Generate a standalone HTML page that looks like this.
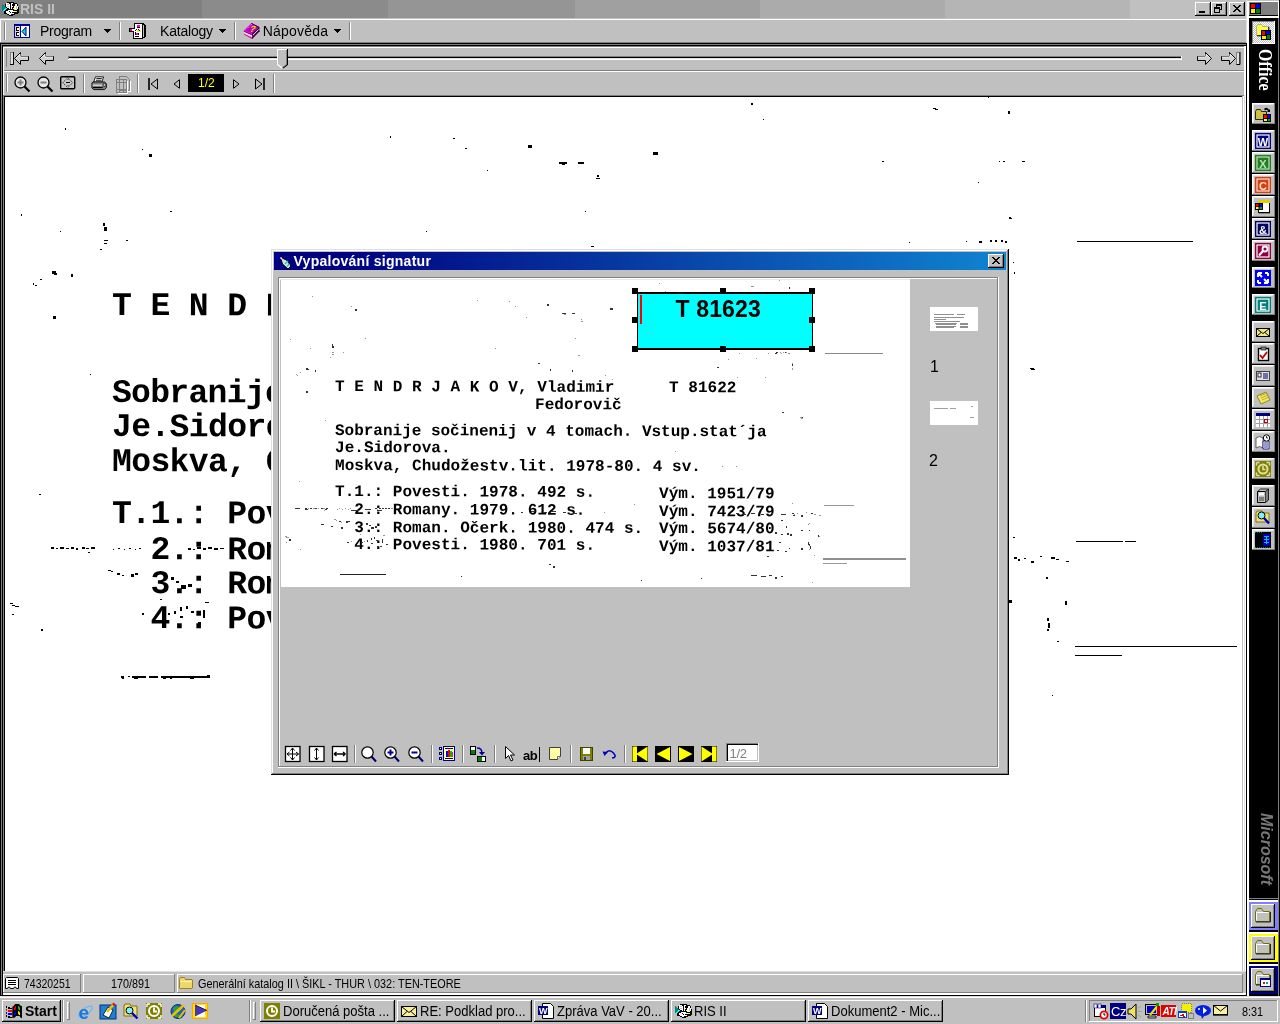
<!DOCTYPE html>
<html><head><meta charset="utf-8"><title>RIS II</title>
<style>
html,body{margin:0;padding:0;background:#fff;}
body{width:1280px;height:1024px;overflow:hidden;position:relative;font-family:"Liberation Sans",sans-serif;}
div,svg{position:absolute;box-sizing:border-box;}
svg{overflow:visible}
.card{font:bold 16px/16px "Liberation Mono",monospace;color:#000;white-space:pre;}
</style></head><body><div id="root" style="left:0;top:0;width:1280px;height:1024px;will-change:transform;">
<div id="doc" style="left:5px;top:97px;width:1237px;height:874px;background:#fff;overflow:hidden;"><div class="card" style="left:107.2px;top:192.7px;font-size:33.00px;line-height:33.00px;letter-spacing:-0.60px;transform:rotate(0.17deg);transform-origin:0 80%;">T E N D R J A K O V, Vladimir</div><div class="card" style="left:773.6px;top:194.2px;font-size:33.00px;line-height:33.00px;letter-spacing:-0.60px;transform:rotate(0.17deg);transform-origin:0 80%;">T 81622</div><div class="card" style="left:505.1px;top:228.2px;font-size:33.00px;line-height:33.00px;letter-spacing:-0.60px;transform:rotate(0.17deg);transform-origin:0 80%;">Fedorovič</div><div class="card" style="left:107.2px;top:279.6px;font-size:33.00px;line-height:33.00px;letter-spacing:-0.69px;transform:rotate(0.17deg);transform-origin:0 80%;">Sobranije sočinenij v 4 tomach. Vstup.stat´ja</div><div class="card" style="left:107.2px;top:314.2px;font-size:33.00px;line-height:33.00px;letter-spacing:-0.60px;transform:rotate(0.17deg);transform-origin:0 80%;">Je.Sidorova.</div><div class="card" style="left:107.2px;top:348.8px;font-size:33.00px;line-height:33.00px;letter-spacing:-0.60px;transform:rotate(0.17deg);transform-origin:0 80%;">Moskva, Chudožestv.lit. 1978-80. 4 sv.</div><div class="card" style="left:107.2px;top:401.4px;font-size:33.00px;line-height:33.00px;letter-spacing:-0.60px;transform:rotate(0.17deg);transform-origin:0 80%;">T.1.: Povesti. 1978. 492 s.</div><div class="card" style="left:107.2px;top:436.6px;font-size:33.00px;line-height:33.00px;letter-spacing:-0.60px;transform:rotate(0.17deg);transform-origin:0 80%;">  2.: Romany. 1979. 612 s.</div><div class="card" style="left:107.2px;top:471.4px;font-size:33.00px;line-height:33.00px;letter-spacing:-0.60px;transform:rotate(0.17deg);transform-origin:0 80%;">  3.: Roman. Očerk. 1980. 474 s.</div><div class="card" style="left:107.2px;top:506.4px;font-size:33.00px;line-height:33.00px;letter-spacing:-0.60px;transform:rotate(0.17deg);transform-origin:0 80%;">  4.: Povesti. 1980. 701 s.</div><div class="card" style="left:753.1px;top:404.2px;font-size:33.00px;line-height:33.00px;letter-spacing:-0.60px;transform:rotate(0.17deg);transform-origin:0 80%;">Vým. 1951/79</div><div class="card" style="left:753.1px;top:439.4px;font-size:33.00px;line-height:33.00px;letter-spacing:-0.60px;transform:rotate(0.17deg);transform-origin:0 80%;">Vým. 7423/79</div><div class="card" style="left:753.1px;top:474.2px;font-size:33.00px;line-height:33.00px;letter-spacing:-0.60px;transform:rotate(0.17deg);transform-origin:0 80%;">Vým. 5674/80</div><div class="card" style="left:753.1px;top:509.2px;font-size:33.00px;line-height:33.00px;letter-spacing:-0.60px;transform:rotate(0.17deg);transform-origin:0 80%;">Vým. 1037/81</div><svg style="left:0;top:0" width="1237" height="874" shape-rendering="crispEdges"><g fill="#000"><rect x="60" y="31" width="1" height="2"/><rect x="137" y="52" width="1" height="1"/><rect x="144" y="57" width="3" height="3"/><rect x="16" y="117" width="1" height="2"/><rect x="165" y="114" width="2" height="1"/><rect x="55" y="134" width="1" height="1"/><rect x="98" y="126" width="2" height="3"/><rect x="99" y="130" width="3" height="4"/><rect x="99" y="143" width="4" height="1"/><rect x="99" y="146" width="3" height="1"/><rect x="121" y="143" width="2" height="1"/><rect x="95" y="152" width="2" height="1"/><rect x="47" y="174" width="4" height="3"/><rect x="49" y="176" width="3" height="2"/><rect x="66" y="177" width="2" height="3"/><rect x="35" y="182" width="2" height="1"/><rect x="28" y="186" width="1" height="2"/><rect x="30" y="188" width="2" height="1"/><rect x="48" y="219" width="3" height="3"/><rect x="85" y="277" width="1" height="1"/><rect x="385" y="39" width="1" height="2"/><rect x="448" y="41" width="2" height="1"/><rect x="460" y="51" width="2" height="1"/><rect x="523" y="48" width="4" height="3"/><rect x="554" y="65" width="8" height="2"/><rect x="557" y="67" width="3" height="1"/><rect x="573" y="65" width="6" height="2"/><rect x="592" y="78" width="2" height="2"/><rect x="591" y="81" width="4" height="1"/><rect x="482" y="73" width="1" height="1"/><rect x="580" y="114" width="1" height="1"/><rect x="421" y="134" width="1" height="1"/><rect x="586" y="149" width="3" height="1"/><rect x="746" y="6" width="2" height="2"/><rect x="758" y="22" width="1" height="1"/><rect x="648" y="55" width="5" height="3"/><rect x="928" y="11" width="3" height="1"/><rect x="930" y="12" width="3" height="1"/><rect x="983" y="0" width="1" height="1"/><rect x="1003" y="14" width="2" height="3"/><rect x="877" y="64" width="2" height="1"/><rect x="994" y="64" width="1" height="1"/><rect x="998" y="64" width="2" height="1"/><rect x="1017" y="64" width="3" height="1"/><rect x="973" y="85" width="1" height="1"/><rect x="1004" y="121" width="3" height="1"/><rect x="904" y="145" width="1" height="1"/><rect x="961" y="144" width="1" height="1"/><rect x="974" y="144" width="3" height="2"/><rect x="985" y="143" width="2" height="2"/><rect x="990" y="143" width="2" height="2"/><rect x="996" y="143" width="2" height="2"/><rect x="1000" y="144" width="2" height="2"/><rect x="1004" y="120" width="2" height="1"/><rect x="1008" y="165" width="1" height="1"/><rect x="1009" y="175" width="1" height="2"/><rect x="1025" y="271" width="4" height="1"/><rect x="1026" y="272" width="4" height="1"/><rect x="1008" y="440" width="2" height="1"/><rect x="1009" y="460" width="3" height="2"/><rect x="1013" y="462" width="2" height="2"/><rect x="1019" y="461" width="2" height="1"/><rect x="1026" y="464" width="3" height="2"/><rect x="1035" y="459" width="2" height="1"/><rect x="1046" y="460" width="4" height="2"/><rect x="1051" y="462" width="3" height="1"/><rect x="1061" y="464" width="3" height="1"/><rect x="1041" y="480" width="2" height="2"/><rect x="1004" y="503" width="3" height="3"/><rect x="1060" y="504" width="2" height="4"/><rect x="1042" y="521" width="2" height="3"/><rect x="1043" y="526" width="2" height="5"/><rect x="1042" y="532" width="2" height="2"/><rect x="1052" y="544" width="2" height="1"/><rect x="1047" y="598" width="1" height="1"/><rect x="34" y="397" width="2" height="1"/><rect x="46" y="450" width="3" height="2"/><rect x="51" y="451" width="2" height="1"/><rect x="55" y="450" width="4" height="2"/><rect x="61" y="451" width="3" height="1"/><rect x="66" y="450" width="3" height="2"/><rect x="71" y="451" width="2" height="2"/><rect x="77" y="450" width="3" height="2"/><rect x="81" y="451" width="3" height="1"/><rect x="86" y="450" width="4" height="2"/><rect x="83" y="455" width="2" height="1"/><rect x="108" y="452" width="1" height="1"/><rect x="113" y="451" width="2" height="1"/><rect x="119" y="452" width="1" height="1"/><rect x="124" y="451" width="2" height="1"/><rect x="130" y="452" width="1" height="1"/><rect x="134" y="451" width="2" height="1"/><rect x="183" y="451" width="3" height="2"/><rect x="188" y="452" width="2" height="1"/><rect x="192" y="450" width="4" height="2"/><rect x="198" y="451" width="3" height="2"/><rect x="203" y="450" width="4" height="2"/><rect x="209" y="451" width="4" height="2"/><rect x="215" y="451" width="4" height="1"/><rect x="103" y="473" width="3" height="1"/><rect x="106" y="474" width="2" height="1"/><rect x="112" y="476" width="3" height="2"/><rect x="117" y="478" width="2" height="1"/><rect x="126" y="477" width="3" height="3"/><rect x="130" y="476" width="3" height="2"/><rect x="5" y="506" width="3" height="1"/><rect x="7" y="508" width="3" height="1"/><rect x="10" y="509" width="4" height="1"/><rect x="7" y="517" width="2" height="1"/><rect x="36" y="532" width="2" height="2"/><rect x="137" y="516" width="2" height="2"/><rect x="166" y="480" width="3" height="3"/><rect x="171" y="484" width="3" height="2"/><rect x="176" y="488" width="5" height="4"/><rect x="183" y="487" width="4" height="3"/><rect x="155" y="502" width="2" height="1"/><rect x="200" y="505" width="4" height="1"/><rect x="175" y="510" width="2" height="4"/><rect x="181" y="509" width="2" height="3"/><rect x="169" y="514" width="2" height="3"/><rect x="186" y="514" width="3" height="2"/><rect x="198" y="513" width="2" height="8"/><rect x="193" y="525" width="3" height="2"/><rect x="175" y="519" width="3" height="2"/><rect x="163" y="516" width="2" height="2"/><rect x="1072" y="144" width="116" height="1"/><rect x="1071" y="444" width="47" height="1"/><rect x="1120" y="444" width="11" height="1"/><rect x="1070" y="549" width="162" height="1"/><rect x="1070" y="558" width="47" height="1"/><rect x="116" y="579" width="3" height="2"/><rect x="117" y="581" width="2" height="1"/><rect x="123" y="579" width="2" height="1"/><rect x="127" y="579" width="14" height="2"/><rect x="129" y="581" width="4" height="1"/><rect x="144" y="579" width="9" height="2"/><rect x="156" y="579" width="49" height="2"/><rect x="158" y="581" width="3" height="1"/><rect x="165" y="581" width="2" height="1"/><rect x="185" y="581" width="4" height="1"/><rect x="202" y="578" width="3" height="1"/></g></svg></div><div style="left:0;top:0;width:1247px;height:18px;background:linear-gradient(to right,#808080 0px,#808080 202px,#8b8b8b 202px,#8b8b8b 388px,#959595 388px,#959595 575px,#a0a0a0 575px,#a0a0a0 760px,#ababab 760px,#ababab 945px,#b5b5b5 945px,#b5b5b5 1130px,#c0c0c0 1130px,#c0c0c0 1247px);"></div><svg style="left:2px;top:1px" width="17" height="16" viewBox="0 0 17 16" shape-rendering="crispEdges" ><path d="M5 1h7v1h3v1h1v3h1v6h-1v1h-3v1h-2v1H7v-1H5v-1H2V8h1V3h2z" fill="#000"/>
<path d="M0 3h1v1h1v1h1v1h1v2H3v1H2v1H0z" fill="#008888"/>
<path d="M1 9h1v-1h1v-1h2v1H4v1H3v1H1z" fill="#00ffff"/>
<path d="M4 2h3v1h1v5H7v-1H5v-1H4zM5 3v1h2v-1zM5 5v1h2v-1z" fill="#fff"/><path d="M5 3h2v1H5zM5 5h2v1H5z" fill="#c0c0c0"/>
<path d="M9 2h2v1H10v2h1v1H10v2H9z" fill="#fff"/>
<path d="M13 3h2v1h1v4h-1v1h-2v-1h-1V5h1z" fill="#fff"/><path d="M14 5h1v3h-1z" fill="#c0c0c0"/><rect x="15" y="4" width="1" height="1" fill="#000"/>
<path d="M4 10h2v-1h5v1h2v1h-3v1h2v1H9v1H7v-1H5v-1H4zM7 10v1h1v-1zM8 11v1h1v-1z" fill="#fff"/>
<rect x="11" y="7" width="1" height="1" fill="#ffff00"/><rect x="12" y="8" width="1" height="1" fill="#ffff00"/><rect x="13" y="10" width="2" height="1" fill="#ffff00"/></svg><div style="left:20px;top:2.15px;font:bold 14px/14px 'Liberation Sans',sans-serif;color:#c0c0c0;white-space:pre;">RIS II</div><div style="left:1195px;top:2px;width:16px;height:14px;background:#c0c0c0;"></div><div style="left:1195px;top:2px;width:15px;height:1px;background:#fff;"></div><div style="left:1195px;top:2px;width:1px;height:13px;background:#fff;"></div><div style="left:1195px;top:15px;width:16px;height:1px;background:#000;"></div><div style="left:1210px;top:2px;width:1px;height:14px;background:#000;"></div><div style="left:1196px;top:14px;width:14px;height:1px;background:#808080;"></div><div style="left:1209px;top:3px;width:1px;height:12px;background:#808080;"></div><div style="left:1211px;top:2px;width:16px;height:14px;background:#c0c0c0;"></div><div style="left:1211px;top:2px;width:15px;height:1px;background:#fff;"></div><div style="left:1211px;top:2px;width:1px;height:13px;background:#fff;"></div><div style="left:1211px;top:15px;width:16px;height:1px;background:#000;"></div><div style="left:1226px;top:2px;width:1px;height:14px;background:#000;"></div><div style="left:1212px;top:14px;width:14px;height:1px;background:#808080;"></div><div style="left:1225px;top:3px;width:1px;height:12px;background:#808080;"></div><div style="left:1229px;top:2px;width:16px;height:14px;background:#c0c0c0;"></div><div style="left:1229px;top:2px;width:15px;height:1px;background:#fff;"></div><div style="left:1229px;top:2px;width:1px;height:13px;background:#fff;"></div><div style="left:1229px;top:15px;width:16px;height:1px;background:#000;"></div><div style="left:1244px;top:2px;width:1px;height:14px;background:#000;"></div><div style="left:1230px;top:14px;width:14px;height:1px;background:#808080;"></div><div style="left:1243px;top:3px;width:1px;height:12px;background:#808080;"></div><svg style="left:1195px;top:2px" width="16" height="14" viewBox="0 0 16 14" shape-rendering="crispEdges" ><rect x="4" y="9" width="6" height="2" fill="#000"/></svg><svg style="left:1211px;top:2px" width="16" height="14" viewBox="0 0 16 14" shape-rendering="crispEdges" ><path d="M5 2h6v2H5zM5 4h1v1H5zM10 4h1v4h-2v-1h1zM3 5h6v2H3zM3 7h1v4H3zM8 7h1v4H8zM3 10h6v1H3z" fill="#000"/></svg><svg style="left:1229px;top:2px" width="16" height="14" viewBox="0 0 16 14" shape-rendering="crispEdges" ><path d="M4 3h2v1h1v1h2v-1h1v-1h2v1h-1v1h-1v1h-1v1h1v1h1v1h1v1h-2v-1h-1v-1h-2v1h-1v1h-2v-1h1v-1h1v-1h1v-1h-1v-1h-1v-1h-1z" fill="#000"/></svg><div style="left:0px;top:18px;width:1247px;height:24px;background:#c0c0c0;"></div><div style="left:0px;top:19px;width:1247px;height:1px;background:#fff;"></div><div style="left:0px;top:19px;width:1px;height:23px;background:#fff;"></div><div style="left:4px;top:22px;width:1px;height:18px;background:#808080;"></div><div style="left:5px;top:22px;width:1px;height:18px;background:#fff;"></div><svg style="left:14px;top:24px" width="16" height="14" viewBox="0 0 16 14" shape-rendering="crispEdges" >
<rect x="0" y="0" width="16" height="14" fill="#0000a0"/>
<rect x="1" y="2" width="5" height="11" fill="#d8d8c0"/>
<rect x="7" y="2" width="8" height="11" fill="#fff"/>
<rect x="2" y="3" width="3" height="4" fill="#000"/><rect x="3" y="4" width="2" height="2" fill="#fff"/>
<rect x="2" y="8" width="3" height="4" fill="#000"/><rect x="3" y="9" width="2" height="2" fill="#fff"/>
<path d="M12 3v9l-4-4.5z" fill="#00e0e0" stroke="#0000a0" stroke-width="1" shape-rendering="auto"/>
</svg><div style="left:40px;top:24.15px;font:14px/14px 'Liberation Sans',sans-serif;color:#000;white-space:pre;letter-spacing:-0.25px;">Program</div><svg style="left:104px;top:29px" width="7" height="4" viewBox="0 0 7 4" shape-rendering="crispEdges" ><path d="M0 0h7v1H0zM1 1h5v1H1zM2 2h3v1H2zM3 3h1v1H3z" fill="#000"/></svg><div style="left:119px;top:22px;width:1px;height:18px;background:#808080;"></div><div style="left:120px;top:22px;width:1px;height:18px;background:#fff;"></div><svg style="left:129px;top:23px" width="17" height="16" viewBox="0 0 17 16" shape-rendering="crispEdges" >
<path d="M5 0h9v16H4V9h1z" fill="#fff" stroke="none"/>
<path d="M5 0h9v1H5zM5 0h1v5H5zM13 0h1v16h-1zM4 15h10v1H4zM4 8h1v8H4zM0 5h6v1H0zM0 8h5v1H0zM0 5h1v4H0z" fill="#000"/>
<path d="M14 1h1v1h1v12h-1v1h-1z" fill="#c0c0c0"/><path d="M14 0h1v1h1v1h1v12h-1v1h-2v-1h1V2h-1z" fill="#000"/>
<rect x="1" y="6" width="2" height="2" fill="#f00080"/><rect x="3" y="6" width="3" height="2" fill="#fff"/>
<rect x="8" y="2" width="3" height="2" fill="#f000f0"/><rect x="8" y="4" width="3" height="1" fill="#000"/>
<rect x="7" y="10" width="2" height="2" fill="#f000f0"/><rect x="6" y="13" width="4" height="1" fill="#000"/>
<rect x="8" y="7" width="2" height="2" fill="#f0f000"/><rect x="11" y="7" width="1" height="2" fill="#f0f000"/>
<path d="M6 7h1v1H6zM7 6h1v1H7zM9 6h1v1H9zM10 7h1v1h-1zM6 9h1v3H6zM9 10h1v2H9z" fill="#000"/>
</svg><div style="left:160px;top:24.15px;font:14px/14px 'Liberation Sans',sans-serif;color:#000;white-space:pre;letter-spacing:-0.2px;">Katalogy</div><svg style="left:219px;top:29px" width="7" height="4" viewBox="0 0 7 4" shape-rendering="crispEdges" ><path d="M0 0h7v1H0zM1 1h5v1H1zM2 2h3v1H2zM3 3h1v1H3z" fill="#000"/></svg><div style="left:234px;top:22px;width:1px;height:18px;background:#808080;"></div><div style="left:235px;top:22px;width:1px;height:18px;background:#fff;"></div><svg style="left:243px;top:22px" width="18" height="18" viewBox="0 0 18 18" shape-rendering="crispEdges" ><g shape-rendering="auto">
<path d="M8.600 1 L16.300 5 L9 11.800 L0.900 8.300 Z" fill="#c000c0"/>
<path d="M8.600 1 L16.300 5 L15.600 5.700 L8 1.600 Z" fill="#300030"/>
<path d="M0.900 8.300 L9 11.800 L9 13.400 L0.900 9.900 Z" fill="#b000b0"/>
<path d="M0.900 9.900 L9 13.400 L9 15.600 L0.900 11.600 Z" fill="#e8f0e8"/>
<path d="M0.900 11.600 L9 15.600 L9 16.900 L0.900 12.600 Z" fill="#f00090"/>
<path d="M9 11.800 L16.300 5 L16.500 9.200 L9 16.900 Z" fill="#a000a0"/>
<path d="M9 11.800 L16.300 5 L16.300 6.400 L9 13.200 Z" fill="#100010"/>
<path d="M9 15.500 L16.500 7.800 L16.500 9.200 L9 16.900 Z" fill="#200020"/>
<path d="M10 13 L15.500 7.500" stroke="#d0d0d0" stroke-width="1"/>
<path d="M2.200 8 L9 2" stroke="#ffb0ff" stroke-width="1" stroke-dasharray="1 1"/>
</g></svg><div style="left:249.5px;top:24.88px;font:bold 9px/9px 'Liberation Sans',sans-serif;color:#ffe000;white-space:pre;transform:skewX(-20deg);">?</div><div style="left:262.7px;top:24.15px;font:14px/14px 'Liberation Sans',sans-serif;color:#000;white-space:pre;letter-spacing:0.2px;">Nápověda</div><svg style="left:334px;top:29px" width="7" height="4" viewBox="0 0 7 4" shape-rendering="crispEdges" ><path d="M0 0h7v1H0zM1 1h5v1H1zM2 2h3v1H2zM3 3h1v1H3z" fill="#000"/></svg><div style="left:349px;top:22px;width:1px;height:18px;background:#808080;"></div><div style="left:350px;top:22px;width:1px;height:18px;background:#fff;"></div><div style="left:0px;top:42px;width:1247px;height:1px;background:#808080;"></div><div style="left:0px;top:43px;width:1247px;height:1px;background:#000;"></div><div style="left:0px;top:44px;width:1px;height:952px;background:#000;"></div><div style="left:1px;top:44px;width:1246px;height:1px;background:#808080;"></div><div style="left:1px;top:44px;width:1px;height:951px;background:#808080;"></div><div style="left:2px;top:45px;width:1245px;height:1px;background:#000;"></div><div style="left:2px;top:45px;width:1px;height:950px;background:#000;"></div><div style="left:1246px;top:43px;width:1px;height:953px;background:#000;"></div><div style="left:3px;top:46px;width:1243px;height:49px;background:#c0c0c0;"></div><div style="left:3px;top:46px;width:1241px;height:1px;background:#808080;"></div><div style="left:3px;top:47px;width:1241px;height:1px;background:#fff;"></div><div style="left:3px;top:47px;width:1px;height:48px;background:#fff;"></div><div style="left:1244px;top:46px;width:2px;height:49px;background:#fff;"></div><div style="left:4px;top:70px;width:1240px;height:1px;background:#808080;"></div><div style="left:4px;top:71px;width:1240px;height:1px;background:#fff;"></div><div style="left:6px;top:50px;width:1px;height:17px;background:#808080;"></div><svg style="left:10px;top:52px" width="20" height="13" viewBox="0 0 20 13" shape-rendering="crispEdges" ><rect x="0.5" y="0.5" width="3" height="12" fill="#e0e0e0" stroke="#808080" shape-rendering="auto"/><path d="M3.5 0v12.5H0" fill="none" stroke="#000" shape-rendering="auto"/><g transform="translate(4,0)"><path d="M0.5 6.5 L6.5 0.5 V4.5 H14.5 V8.5 H6.5 V12.5 Z" fill="#d0d0d0" stroke="#000" stroke-width="1" shape-rendering="auto"/><path d="M1.5 6.5 L6 2 V5 H14" fill="none" stroke="#f0f0f0" stroke-width="1" shape-rendering="auto"/></g></svg><svg style="left:39px;top:52px" width="16" height="13" viewBox="0 0 16 13" shape-rendering="crispEdges" ><path d="M0.5 6.5 L6.5 0.5 V4.5 H14.5 V8.5 H6.5 V12.5 Z" fill="#d0d0d0" stroke="#000" stroke-width="1" shape-rendering="auto"/><path d="M1.5 6.5 L6 2 V5 H14" fill="none" stroke="#f0f0f0" stroke-width="1" shape-rendering="auto"/></svg><svg style="left:1197px;top:52px" width="16" height="13" viewBox="0 0 16 13" shape-rendering="crispEdges" ><g transform="translate(15,0) scale(-1,1)"><path d="M0.5 6.5 L6.5 0.5 V4.5 H14.5 V8.5 H6.5 V12.5 Z" fill="#d0d0d0" stroke="#000" stroke-width="1" shape-rendering="auto"/><path d="M1.5 6.5 L6 2 V5 H14" fill="none" stroke="#f0f0f0" stroke-width="1" shape-rendering="auto"/></g></svg><svg style="left:1221px;top:52px" width="20" height="13" viewBox="0 0 20 13" shape-rendering="crispEdges" ><g transform="translate(15,0) scale(-1,1)"><path d="M0.5 6.5 L6.5 0.5 V4.5 H14.5 V8.5 H6.5 V12.5 Z" fill="#d0d0d0" stroke="#000" stroke-width="1" shape-rendering="auto"/><path d="M1.5 6.5 L6 2 V5 H14" fill="none" stroke="#f0f0f0" stroke-width="1" shape-rendering="auto"/></g><rect x="15.5" y="0.5" width="3" height="12" fill="#e0e0e0" stroke="#808080" shape-rendering="auto"/><path d="M19 0v12.5H15.5" fill="none" stroke="#000" shape-rendering="auto"/></svg><div style="left:68px;top:56px;width:1114px;height:1px;background:#808080;"></div><div style="left:68px;top:57px;width:1114px;height:1px;background:#000;"></div><div style="left:68px;top:58px;width:1114px;height:1px;background:#dfdfdf;"></div><div style="left:68px;top:59px;width:1114px;height:1px;background:#fff;"></div><div style="left:1181px;top:56px;width:1px;height:4px;background:#fff;"></div><div style="left:68px;top:56px;width:1px;height:3px;background:#808080;"></div><svg style="left:277px;top:49px" width="11" height="19" viewBox="0 0 11 19" shape-rendering="crispEdges" ><path d="M0 0h11v16l-5.500 3-5.500-3z" fill="#c0c0c0"/>
<path d="M0 0h10v1H0zM0 0h1v16H0z" fill="#fff"/><path d="M0.500 15.500l4.500 3.500" stroke="#fff" stroke-width="1.200" shape-rendering="auto"/>
<path d="M10 0h1v16h-1z" fill="#000"/><path d="M9 1h1v15H9z" fill="#808080"/>
<path d="M10.500 15.500l-4.500 3.500" stroke="#000" stroke-width="1.200" shape-rendering="auto"/><path d="M9.500 15.500l-4 3" stroke="#808080" shape-rendering="auto"/></svg><div style="left:6px;top:74px;width:1px;height:18px;background:#808080;"></div><div style="left:7px;top:74px;width:1px;height:18px;background:#fff;"></div><svg style="left:14px;top:76px" width="17" height="17" viewBox="0 0 17 17" shape-rendering="crispEdges" ><g shape-rendering="auto"><circle cx="6.5" cy="6.5" r="5.5" fill="#e8e8e8" stroke="#000" stroke-width="1.3"/><path d="M10.5 10.5 L15.5 15.5" stroke="#000" stroke-width="2.2"/><path d="M3.5 6.5h6M6.5 3.5v6" stroke="#808080" stroke-width="2"/></g></svg><svg style="left:37px;top:76px" width="17" height="17" viewBox="0 0 17 17" shape-rendering="crispEdges" ><g shape-rendering="auto"><circle cx="6.5" cy="6.5" r="5.5" fill="#e8e8e8" stroke="#000" stroke-width="1.3"/><path d="M10.5 10.5 L15.5 15.5" stroke="#000" stroke-width="2.2"/><path d="M3.5 6.5h6" stroke="#808080" stroke-width="2"/></g></svg><svg style="left:60px;top:76px" width="16" height="14" viewBox="0 0 16 14" shape-rendering="crispEdges" ><rect x="0.7" y="0.7" width="14" height="12" rx="1" fill="#c8c8c8" stroke="#000" stroke-width="1.4" shape-rendering="auto"/><g shape-rendering="auto" fill="none" stroke="#303030" stroke-width="1" stroke-dasharray="1.5 1"><path d="M7.7 1.8l5 4.9l-5 4.9l-5-4.9z"/></g><path d="M6 6h4v1H6z" fill="#000"/><path d="M7 3h2v1H7zM7 9h2v1H7zM3 6h1v1H3zM12 6h1v1h-1z" fill="#808080"/></svg><div style="left:83px;top:74px;width:1px;height:19px;background:#808080;"></div><div style="left:84px;top:74px;width:1px;height:19px;background:#fff;"></div><svg style="left:91px;top:76px" width="17" height="15" viewBox="0 0 17 15" shape-rendering="crispEdges" ><g shape-rendering="auto" transform="scale(0.9,0.85)">
<path d="M5 1h9l-2 6H3z" fill="#fff" stroke="#000" stroke-width="1"/>
<path d="M6 3h6M5.5 5h6" stroke="#000" stroke-width="1"/>
<path d="M1 8l2-1h12l2 2v5l-2 2H3l-2-2z" fill="#808080" stroke="#000" stroke-width="1"/>
<path d="M2 10h11v2H2z" fill="#d0d0d0"/>
<path d="M2 13.5h11" stroke="#000" stroke-width="1.5"/>
<circle cx="15" cy="10.5" r="1.8" fill="#c0c0c0" stroke="#000" stroke-width=".8"/>
</g></svg><svg style="left:116px;top:76px" width="16" height="16" viewBox="0 0 16 16" shape-rendering="crispEdges" ><g fill="none" stroke="#808080"><path d="M3.5 0.5h7l3 3v11h-10z"/><path d="M0.5 3.5h10v13h-10z"/><path d="M3.5 3.5v13M7.5 3.5v13M0.5 6.5h10M0.5 13.5h10"/></g><g fill="none" stroke="#fff"><path d="M1.5 17.5h10v-13M14.5 4.5v11h-3"/></g></svg><div style="left:137px;top:74px;width:1px;height:19px;background:#808080;"></div><div style="left:138px;top:74px;width:1px;height:19px;background:#fff;"></div><svg style="left:148px;top:78px" width="11" height="12" viewBox="0 0 11 12" shape-rendering="crispEdges" ><g shape-rendering="auto"><path d="M1 0v12" stroke="#000" stroke-width="1.6"/><path d="M9.5 1v10L3 6z" fill="#c0c0c0" stroke="#000" stroke-width="1"/></g></svg><svg style="left:173px;top:79px" width="8" height="10" viewBox="0 0 8 10" shape-rendering="crispEdges" ><path d="M6.5 0.7v8.6L1 5z" fill="#c0c0c0" stroke="#000" stroke-width="1" shape-rendering="auto"/></svg><div style="left:188px;top:74px;width:36px;height:18px;background:#000;"></div><div style="left:198px;top:76.84px;font:12px/12px 'Liberation Sans',sans-serif;color:#ffff00;white-space:pre;">1/2</div><svg style="left:232px;top:79px" width="8" height="10" viewBox="0 0 8 10" shape-rendering="crispEdges" ><path d="M1.5 0.7v8.6L7 5z" fill="#c0c0c0" stroke="#000" stroke-width="1" shape-rendering="auto"/></svg><svg style="left:254px;top:78px" width="11" height="12" viewBox="0 0 11 12" shape-rendering="crispEdges" ><g shape-rendering="auto"><path d="M10 0v12" stroke="#000" stroke-width="1.6"/><path d="M1.5 1v10L8 6z" fill="#c0c0c0" stroke="#000" stroke-width="1"/></g></svg><div style="left:273px;top:74px;width:1px;height:19px;background:#808080;"></div><div style="left:274px;top:74px;width:1px;height:19px;background:#fff;"></div><div style="left:3px;top:95px;width:1241px;height:1px;background:#808080;"></div><div style="left:3px;top:95px;width:1px;height:876px;background:#808080;"></div><div style="left:4px;top:96px;width:1238px;height:1px;background:#000;"></div><div style="left:4px;top:96px;width:1px;height:875px;background:#000;"></div><div style="left:1242px;top:96px;width:1px;height:875px;background:#c0c0c0;"></div><div style="left:1243px;top:96px;width:1px;height:875px;background:#fff;"></div><div style="left:1244px;top:95px;width:1px;height:876px;background:#dfdfdf;"></div><div style="left:1245px;top:95px;width:1px;height:900px;background:#fff;"></div><div style="left:3px;top:971px;width:1243px;height:24px;background:#c0c0c0;"></div><div style="left:3px;top:971px;width:1243px;height:1px;background:#dfdfdf;"></div><div style="left:3px;top:993px;width:1243px;height:2px;background:#fff;"></div><div style="left:0px;top:995px;width:1247px;height:1px;background:#000;"></div><div style="left:3px;top:974px;width:78px;height:19px;background:#c0c0c0;"></div><div style="left:3px;top:974px;width:78px;height:1px;background:#fff;"></div><div style="left:3px;top:974px;width:1px;height:19px;background:#fff;"></div><div style="left:3px;top:992px;width:78px;height:1px;background:#808080;"></div><div style="left:80px;top:974px;width:1px;height:19px;background:#808080;"></div><div style="left:83px;top:974px;width:92px;height:19px;background:#c0c0c0;"></div><div style="left:83px;top:974px;width:92px;height:1px;background:#fff;"></div><div style="left:83px;top:974px;width:1px;height:19px;background:#fff;"></div><div style="left:83px;top:992px;width:92px;height:1px;background:#808080;"></div><div style="left:174px;top:974px;width:1px;height:19px;background:#808080;"></div><div style="left:177px;top:974px;width:1066px;height:19px;background:#c0c0c0;"></div><div style="left:177px;top:974px;width:1066px;height:1px;background:#fff;"></div><div style="left:177px;top:974px;width:1px;height:19px;background:#fff;"></div><div style="left:177px;top:992px;width:1066px;height:1px;background:#808080;"></div><div style="left:1242px;top:974px;width:1px;height:19px;background:#808080;"></div><svg style="left:5px;top:977px" width="14" height="12" viewBox="0 0 14 12" shape-rendering="crispEdges" ><path d="M1.5 0.5h11l1 1v10h-2l-1-1.5h-1l-1 1.5h-3l-1-1.5h-1l-1 1.5h-2v-10z" fill="#fff" stroke="#000" shape-rendering="auto"/><path d="M3 3h8v1H3zM3 5h8v1H3zM3 7h8v1H3z" fill="#000"/></svg><div style="left:24px;top:976.87px;font:13.5px/13.5px 'Liberation Sans',sans-serif;color:#000;white-space:pre;transform:scaleX(0.775);transform-origin:0 0;">74320251</div><div style="left:111px;top:976.87px;font:13.5px/13.5px 'Liberation Sans',sans-serif;color:#000;white-space:pre;transform:scaleX(0.8);transform-origin:0 0;">170/891</div><svg style="left:179px;top:977px" width="14" height="12" viewBox="0 0 14 12" shape-rendering="crispEdges" ><g shape-rendering="auto"><path d="M0.5 2.5l1-2h4l1 2h6.500l.5 .5v8l-.5 .5h-12l-.5-.5z" fill="#f0d868" stroke="#a08018" stroke-width="1"/><path d="M1.500 4.500h11" stroke="#fff8c0"/></g></svg><div style="left:197.5px;top:976.87px;font:13.5px/13.5px 'Liberation Sans',sans-serif;color:#000;white-space:pre;transform:scaleX(0.806);transform-origin:0 0;">Generální katalog II \ ŠIKL - THUR \ 032: TEN-TEORE</div><div style="left:0px;top:996px;width:1280px;height:28px;background:#c0c0c0;"></div><div style="left:0px;top:996px;width:1280px;height:1px;background:#dfdfdf;"></div><div style="left:0px;top:997px;width:1280px;height:1px;background:#fff;"></div><div style="left:2px;top:1000px;width:59px;height:22px;background:#c0c0c0;"></div><div style="left:2px;top:1000px;width:58px;height:1px;background:#fff;"></div><div style="left:2px;top:1000px;width:1px;height:21px;background:#fff;"></div><div style="left:2px;top:1021px;width:59px;height:1px;background:#000;"></div><div style="left:60px;top:1000px;width:1px;height:22px;background:#000;"></div><div style="left:3px;top:1020px;width:57px;height:1px;background:#808080;"></div><div style="left:59px;top:1001px;width:1px;height:20px;background:#808080;"></div><svg style="left:5px;top:1003px" width="18" height="16" viewBox="0 0 18 16" shape-rendering="crispEdges" ><g shape-rendering="auto">
<path d="M7.300 4 L9 2.500 L10.300 1 H14 L15 2.300 L17 3.300 V15.200 L15.500 14.500 L14.500 13 H11 L10 14.500 L7.300 15 Z" fill="#000"/>
<path d="M9 5.500 L10 3 L11 3 L10.800 6.500 L9.200 7.300Z" fill="#ff0000"/>
<path d="M13 3 L14 3.300 L15 5 L15 7.300 L14 7 L13.200 5.500Z" fill="#00e000"/>
<path d="M9 10.500 L10 8.300 L11 8 L10.800 11.500 L9.200 12.300Z" fill="#0000ff"/>
<path d="M13 8 L14 8.300 L15 10 L15 12.300 L14 12 L13.200 10.500Z" fill="#ffff00"/>
</g>
<path d="M1 3h1v2H1zM1 12h1v2H1zM3 4h2v1h2v1H3zM3 13h2v1h2v1H3z" fill="#000"/>
<path d="M1 6h1v2H1zM3 7h4v2H3z" fill="#ff0000"/>
<path d="M1 9h1v2H1zM3 10h4v2H3z" fill="#0000ff"/>
</svg><div style="left:25px;top:1004.15px;font:bold 14px/14px 'Liberation Sans',sans-serif;color:#000;white-space:pre;">Start</div><div style="left:62px;top:1000px;width:1px;height:22px;background:#808080;"></div><div style="left:63px;top:1000px;width:1px;height:22px;background:#fff;"></div><div style="left:67px;top:1002px;width:1px;height:18px;background:#fff;"></div><div style="left:67px;top:1002px;width:3px;height:1px;background:#fff;"></div><div style="left:69px;top:1002px;width:1px;height:18px;background:#808080;"></div><div style="left:67px;top:1019px;width:3px;height:1px;background:#808080;"></div><svg style="left:77px;top:1003px" width="17" height="17" viewBox="0 0 17 17" shape-rendering="crispEdges" ><g shape-rendering="auto"><ellipse cx="8.500" cy="8.500" rx="8" ry="3.200" fill="none" stroke="#60b8ff" stroke-width="1.200" transform="rotate(-35 8.500 8.500)"/><text x="1.500" y="15.500" font-family="Liberation Sans,sans-serif" font-weight="bold" font-size="19" fill="#1878e0">e</text></g></svg><svg style="left:100px;top:1003px" width="17" height="17" viewBox="0 0 17 17" shape-rendering="crispEdges" ><g shape-rendering="auto"><rect x="0" y="2" width="16" height="14" fill="#2080d0" stroke="#003080"/><path d="M3 12l5-8 5 3-4 8z" fill="#fff" stroke="#000" stroke-width=".8"/><path d="M7 9L14 1" stroke="#f0c000" stroke-width="2.500"/><path d="M13 2l1.500-1.500" stroke="#f00000" stroke-width="2.500"/></g></svg><svg style="left:123px;top:1003px" width="17" height="17" viewBox="0 0 17 17" shape-rendering="crispEdges" ><g shape-rendering="auto"><path d="M1 3l1-2h5l1 2h6v10H1z" fill="#f0e080" stroke="#807000"/><circle cx="6.500" cy="7.500" r="3.500" fill="#80f0ff" stroke="#000"/><path d="M9 10l5.500 5.500" stroke="#0000c0" stroke-width="2.400"/></g></svg><svg style="left:146px;top:1003px" width="17" height="17" viewBox="0 0 17 17" shape-rendering="crispEdges" ><g shape-rendering="auto"><rect x="0" y="0" width="16" height="16" fill="#808000"/><circle cx="8" cy="8" r="5" fill="none" stroke="#fff" stroke-width="2"/><path d="M8 4.500v4h3" fill="none" stroke="#fff" stroke-width="1.800"/><path d="M1 1h3M1 1v3M15 1h-3M15 1v3M1 15h3M1 15v-3M15 15h-3M15 15v-3" stroke="#fff" stroke-width="1.400"/></g></svg><svg style="left:170px;top:1003px" width="17" height="17" viewBox="0 0 17 17" shape-rendering="crispEdges" ><g shape-rendering="auto"><circle cx="8" cy="8.500" r="7" fill="#2060c0" stroke="#103070"/><path d="M3 5q3-3 6-1t-2 4 3 4-5 2z" fill="#30a030"/><path d="M2 13L14 2" stroke="#f0c000" stroke-width="2.600"/><path d="M9 15l6-8" stroke="#f0c000" stroke-width="2"/></g></svg><svg style="left:192px;top:1003px" width="16" height="16" viewBox="0 0 16 16" shape-rendering="crispEdges" ><g shape-rendering="auto"><rect x="0" y="0" width="16" height="16" fill="#ffa800"/><rect x="1" y="1" width="14" height="14" fill="#ffe000"/><rect x="3" y="2" width="10" height="12" fill="#fff"/><path d="M3 2l12 5.500-12 6z" fill="#4838b0"/><path d="M3 2l12 5.500" stroke="#201060" stroke-width="1"/></g></svg><div style="left:249px;top:1000px;width:1px;height:22px;background:#808080;"></div><div style="left:250px;top:1000px;width:1px;height:22px;background:#fff;"></div><div style="left:253px;top:1002px;width:1px;height:18px;background:#fff;"></div><div style="left:253px;top:1002px;width:3px;height:1px;background:#fff;"></div><div style="left:255px;top:1002px;width:1px;height:18px;background:#808080;"></div><div style="left:253px;top:1019px;width:3px;height:1px;background:#808080;"></div><div style="left:260px;top:1000px;width:135px;height:22px;background:#c0c0c0;"></div><div style="left:260px;top:1000px;width:134px;height:1px;background:#fff;"></div><div style="left:260px;top:1000px;width:1px;height:21px;background:#fff;"></div><div style="left:260px;top:1021px;width:135px;height:1px;background:#000;"></div><div style="left:394px;top:1000px;width:1px;height:22px;background:#000;"></div><div style="left:261px;top:1020px;width:133px;height:1px;background:#808080;"></div><div style="left:393px;top:1001px;width:1px;height:20px;background:#808080;"></div><svg style="left:264px;top:1003px" width="16" height="16" viewBox="0 0 16 16" shape-rendering="crispEdges" ><g shape-rendering="auto"><rect width="16" height="16" fill="#808000"/><circle cx="8" cy="8" r="5" fill="none" stroke="#fff" stroke-width="2"/><path d="M8 4.500v4h3" fill="none" stroke="#fff" stroke-width="1.800"/></g></svg><div style="left:282.5px;top:1004.15px;font:14px/14px 'Liberation Sans',sans-serif;color:#000;white-space:pre;transform:scaleX(0.93);transform-origin:0 0;">Doručená pošta ...</div><div style="left:397px;top:1000px;width:135px;height:22px;background:#c0c0c0;"></div><div style="left:397px;top:1000px;width:134px;height:1px;background:#fff;"></div><div style="left:397px;top:1000px;width:1px;height:21px;background:#fff;"></div><div style="left:397px;top:1021px;width:135px;height:1px;background:#000;"></div><div style="left:531px;top:1000px;width:1px;height:22px;background:#000;"></div><div style="left:398px;top:1020px;width:133px;height:1px;background:#808080;"></div><div style="left:530px;top:1001px;width:1px;height:20px;background:#808080;"></div><svg style="left:401px;top:1006px" width="16" height="11" viewBox="0 0 16 11" shape-rendering="crispEdges" ><g shape-rendering="auto"><rect x="0.500" y="0.500" width="15" height="10" fill="#f8f0a0" stroke="#000"/><path d="M0.500 0.500l7.500 6 7.500-6M0.500 10.500l5.500-5M15.500 10.500l-5.500-5" fill="none" stroke="#000"/></g></svg><div style="left:419.5px;top:1004.15px;font:14px/14px 'Liberation Sans',sans-serif;color:#000;white-space:pre;transform:scaleX(0.93);transform-origin:0 0;">RE: Podklad pro...</div><div style="left:534px;top:1000px;width:135px;height:22px;background:#c0c0c0;"></div><div style="left:534px;top:1000px;width:134px;height:1px;background:#fff;"></div><div style="left:534px;top:1000px;width:1px;height:21px;background:#fff;"></div><div style="left:534px;top:1021px;width:135px;height:1px;background:#000;"></div><div style="left:668px;top:1000px;width:1px;height:22px;background:#000;"></div><div style="left:535px;top:1020px;width:133px;height:1px;background:#808080;"></div><div style="left:667px;top:1001px;width:1px;height:20px;background:#808080;"></div><svg style="left:538px;top:1003px" width="16" height="16" viewBox="0 0 16 16" shape-rendering="crispEdges" ><g shape-rendering="auto"><path d="M4.500 0.500h8l3 3v12h-11z" fill="#fff" stroke="#000"/><rect x="0" y="3" width="10" height="9" fill="#000080"/><text x="1" y="10.500" font-family="Liberation Sans,sans-serif" font-weight="bold" font-size="9" fill="#fff">W</text></g></svg><div style="left:556.5px;top:1004.15px;font:14px/14px 'Liberation Sans',sans-serif;color:#000;white-space:pre;transform:scaleX(0.93);transform-origin:0 0;">Zpráva VaV - 20...</div><div style="left:671px;top:1000px;width:135px;height:22px;background:#c0c0c0;"></div><div style="left:671px;top:1000px;width:134px;height:1px;background:#fff;"></div><div style="left:671px;top:1000px;width:1px;height:21px;background:#fff;"></div><div style="left:671px;top:1021px;width:135px;height:1px;background:#000;"></div><div style="left:805px;top:1000px;width:1px;height:22px;background:#000;"></div><div style="left:672px;top:1020px;width:133px;height:1px;background:#808080;"></div><div style="left:804px;top:1001px;width:1px;height:20px;background:#808080;"></div><svg style="left:675px;top:1003px" width="17" height="16" viewBox="0 0 17 16" shape-rendering="crispEdges" ><path d="M5 1h7v1h3v1h1v3h1v6h-1v1h-3v1h-2v1H7v-1H5v-1H2V8h1V3h2z" fill="#000"/>
<path d="M0 3h1v1h1v1h1v1h1v2H3v1H2v1H0z" fill="#008888"/>
<path d="M1 9h1v-1h1v-1h2v1H4v1H3v1H1z" fill="#00ffff"/>
<path d="M4 2h3v1h1v5H7v-1H5v-1H4zM5 3v1h2v-1zM5 5v1h2v-1z" fill="#fff"/><path d="M5 3h2v1H5zM5 5h2v1H5z" fill="#c0c0c0"/>
<path d="M9 2h2v1H10v2h1v1H10v2H9z" fill="#fff"/>
<path d="M13 3h2v1h1v4h-1v1h-2v-1h-1V5h1z" fill="#fff"/><path d="M14 5h1v3h-1z" fill="#c0c0c0"/><rect x="15" y="4" width="1" height="1" fill="#000"/>
<path d="M4 10h2v-1h5v1h2v1h-3v1h2v1H9v1H7v-1H5v-1H4zM7 10v1h1v-1zM8 11v1h1v-1z" fill="#fff"/>
<rect x="11" y="7" width="1" height="1" fill="#ffff00"/><rect x="12" y="8" width="1" height="1" fill="#ffff00"/><rect x="13" y="10" width="2" height="1" fill="#ffff00"/></svg><div style="left:693.5px;top:1004.15px;font:14px/14px 'Liberation Sans',sans-serif;color:#000;white-space:pre;transform:scaleX(0.93);transform-origin:0 0;">RIS II</div><div style="left:808px;top:1000px;width:135px;height:22px;background:#c0c0c0;"></div><div style="left:808px;top:1000px;width:134px;height:1px;background:#fff;"></div><div style="left:808px;top:1000px;width:1px;height:21px;background:#fff;"></div><div style="left:808px;top:1021px;width:135px;height:1px;background:#000;"></div><div style="left:942px;top:1000px;width:1px;height:22px;background:#000;"></div><div style="left:809px;top:1020px;width:133px;height:1px;background:#808080;"></div><div style="left:941px;top:1001px;width:1px;height:20px;background:#808080;"></div><svg style="left:812px;top:1003px" width="16" height="16" viewBox="0 0 16 16" shape-rendering="crispEdges" ><g shape-rendering="auto"><path d="M4.500 0.500h8l3 3v12h-11z" fill="#fff" stroke="#000"/><rect x="0" y="3" width="10" height="9" fill="#000080"/><text x="1" y="10.500" font-family="Liberation Sans,sans-serif" font-weight="bold" font-size="9" fill="#fff">W</text></g></svg><div style="left:830.5px;top:1004.15px;font:14px/14px 'Liberation Sans',sans-serif;color:#000;white-space:pre;transform:scaleX(0.93);transform-origin:0 0;">Dokument2 - Mic...</div><div style="left:1085px;top:1000px;width:1px;height:22px;background:#808080;"></div><div style="left:1086px;top:1000px;width:1px;height:22px;background:#fff;"></div><div style="left:1089px;top:1000px;width:189px;height:22px;background:#c0c0c0;"></div><div style="left:1089px;top:1000px;width:189px;height:1px;background:#808080;"></div><div style="left:1089px;top:1000px;width:1px;height:22px;background:#808080;"></div><div style="left:1089px;top:1021px;width:189px;height:1px;background:#fff;"></div><div style="left:1277px;top:1000px;width:1px;height:22px;background:#fff;"></div><svg style="left:1093px;top:1003px" width="17" height="17" viewBox="0 0 17 17" shape-rendering="crispEdges" ><g shape-rendering="auto"><rect x="1.500" y="4.500" width="11" height="9" fill="#fff" stroke="#000"/><rect x="1" y="2" width="12" height="3" fill="#000080"/><rect x="1" y="1" width="3" height="4" fill="#fff" stroke="#000080" stroke-width=".6"/><rect x="5" y="1" width="3" height="4" fill="#fff" stroke="#000080" stroke-width=".6"/><circle cx="11" cy="12" r="3.600" fill="#fff" stroke="#e00000" stroke-width="1.800"/><path d="M11 10v2h1.500" stroke="#000" fill="none"/></g></svg><div style="left:1110px;top:1003px;width:16px;height:16px;background:#000080;"></div><div style="left:1111px;top:1005.00px;font:13px/13px 'Liberation Sans',sans-serif;color:#fff;white-space:pre;letter-spacing:-0.3px;">Cz</div><svg style="left:1127px;top:1003px" width="17" height="17" viewBox="0 0 17 17" shape-rendering="crispEdges" ><g shape-rendering="auto"><path d="M1 6h3l5-5v15l-5-5H1z" fill="#f0e060" stroke="#000" stroke-width="1"/><path d="M11 5l3-2M11 8.500h4M11 12l3 2" stroke="#a0a0a0" stroke-width="1"/></g></svg><svg style="left:1145px;top:1003px" width="17" height="17" viewBox="0 0 17 17" shape-rendering="crispEdges" ><g shape-rendering="auto"><rect x="0.500" y="1.500" width="12" height="10" fill="#c0c0c0" stroke="#000"/><rect x="2" y="3" width="9" height="7" fill="#0000c0"/><path d="M3 13h8v2H3z" fill="#c0c0c0" stroke="#000" stroke-width=".8"/><path d="M5 12L14 1" stroke="#f0e000" stroke-width="2"/><rect x="12" y="3" width="3" height="10" fill="#c00000"/><path d="M11 0h3v3h-3z" fill="#00a000"/></g></svg><div style="left:1161px;top:1005px;width:15px;height:12px;background:#e00000;"></div><div style="left:1162.5px;top:1007.03px;font:bold 10px/10px 'Liberation Sans',sans-serif;color:#fff;white-space:pre;letter-spacing:-0.6px;font-style:italic;">ATI</div><svg style="left:1178px;top:1003px" width="17" height="17" viewBox="0 0 17 17" shape-rendering="crispEdges" ><g><rect x="3.500" y="0.500" width="10" height="9" fill="#f0f000" stroke="#808080" stroke-dasharray="1 1"/><rect x="0" y="8" width="9" height="7" fill="#0040e0"/><rect x="1" y="10" width="7" height="4" fill="#fff"/><path d="M2 12h2v-1h1v2h2" stroke="#e00000" fill="none"/><rect x="10" y="10" width="5" height="5" fill="#c0c0c0" stroke="#808080"/></g></svg><svg style="left:1195px;top:1003px" width="17" height="17" viewBox="0 0 17 17" shape-rendering="crispEdges" ><g shape-rendering="auto"><ellipse cx="8" cy="7.500" rx="8" ry="5.500" fill="#0020e0"/><path d="M6 12l1 4 3-4z" fill="#0020e0"/><path d="M8 4v7l4-3.500z" fill="#fff"/><circle cx="4" cy="6" r="1" fill="#fff"/></g></svg><svg style="left:1213px;top:1005px" width="15" height="11" viewBox="0 0 15 11" shape-rendering="crispEdges" ><g shape-rendering="auto"><rect x="0.500" y="0.500" width="14" height="9" fill="#f8f0a0" stroke="#000"/><path d="M0.500 0.500l7 5.500 7-5.500" fill="none" stroke="#000"/><path d="M0 10.500h15" stroke="#404040"/></g></svg><div style="left:1241.5px;top:1005.92px;font:12.5px/12.5px 'Liberation Sans',sans-serif;color:#000;white-space:pre;transform:scaleX(0.87);transform-origin:0 0;">8:31</div><div style="left:1247px;top:0px;width:33px;height:996px;background:#000;"></div><div style="left:1247px;top:0px;width:2px;height:996px;background:#fff;"></div><div style="left:1246px;top:0px;width:1px;height:43px;background:#dfdfdf;"></div><div style="left:1247px;top:0px;width:33px;height:1px;background:#c0c0c0;"></div><div style="left:1247px;top:1px;width:32px;height:1px;background:#fff;"></div><div style="left:1249px;top:2px;width:29px;height:13px;background:#808080;"></div><div style="left:1249px;top:15px;width:29px;height:1px;background:#000;"></div><div style="left:1249px;top:16px;width:29px;height:2px;background:#fff;"></div><div style="left:1278px;top:1px;width:1px;height:17px;background:#fff;"></div><div style="left:1278px;top:18px;width:1px;height:978px;background:#808080;"></div><div style="left:1279px;top:0px;width:1px;height:996px;background:#000;"></div><svg style="left:1250px;top:3px" width="11" height="11" viewBox="0 0 11 11" shape-rendering="crispEdges" ><rect width="11" height="11" fill="#000"/><rect x="1" y="1" width="4" height="4" fill="#f00000"/><rect x="6" y="1" width="4" height="4" fill="#0000e0"/><rect x="1" y="6" width="4" height="4" fill="#f0f000"/><rect x="6" y="6" width="4" height="4" fill="#008000"/></svg><div style="left:1252px;top:21px;width:23px;height:23px;background:#e0e0e0;background:repeating-conic-gradient(#fff 0% 25%,#c0c0c0 0% 50%) 0 0/2px 2px;"></div><div style="left:1252px;top:21px;width:23px;height:1px;background:#808080;"></div><div style="left:1252px;top:21px;width:1px;height:23px;background:#808080;"></div><div style="left:1252px;top:43px;width:23px;height:1px;background:#fff;"></div><div style="left:1274px;top:21px;width:1px;height:23px;background:#fff;"></div><svg style="left:1256px;top:24px" width="14" height="13" viewBox="0 0 14 13" shape-rendering="crispEdges" ><g shape-rendering="auto"><path d="M0.5 2.500l1.500-2h3.500l1.500 2h5.500v9h-12z" fill="#ffff40" stroke="#a0a0a0" stroke-width=".8"/><path d="M1 11.800h11.500" stroke="#000" stroke-width="1"/><path d="M12.800 3v8" stroke="#000" stroke-width="1"/></g></svg><svg style="left:1261px;top:30px" width="10" height="10" viewBox="0 0 10 10" shape-rendering="crispEdges" ><rect width="10" height="10" fill="#000"/><rect x="1" y="1" width="3" height="4" fill="#f00000"/><rect x="5" y="1" width="4" height="3" fill="#0000e0"/><rect x="1" y="6" width="4" height="3" fill="#f0f000"/><rect x="6" y="5" width="3" height="4" fill="#008000"/></svg><div style="left:1253px;top:48px;width:22px;height:44px;"><div style="left:23px;top:0.500px;transform:rotate(90deg) scale(0.86,1);transform-origin:0 0;font:bold 18.500px/22px 'Liberation Serif',serif;color:#fff;white-space:pre;">Office</div></div><div style="left:1252px;top:103px;width:23px;height:21px;background:#c0c0c0;"></div><div style="left:1252px;top:103px;width:23px;height:1px;background:#fff;"></div><div style="left:1252px;top:103px;width:1px;height:21px;background:#fff;"></div><div style="left:1252px;top:123px;width:23px;height:1px;background:#808080;"></div><div style="left:1274px;top:103px;width:1px;height:21px;background:#808080;"></div><div style="left:1253px;top:104px;width:20px;height:1px;background:#e8e8e8;"></div><div style="left:1253px;top:104px;width:1px;height:18px;background:#e8e8e8;"></div><svg style="left:1255px;top:106px" width="16" height="16" viewBox="0 0 16 16" shape-rendering="crispEdges" ><g shape-rendering="auto"><path d="M0.500 5.500l1-2h4l1 2h5v8h-11z" fill="#d0c040" stroke="#000" stroke-width=".8"/><path d="M9 3q3-3 5 1l1-1v3h-3l1-1q-1.500-2-3-.5z" fill="#000"/></g><rect x="8" y="8" width="8" height="8" fill="#000"/><rect x="9" y="9" width="3" height="3" fill="#f00"/><rect x="13" y="9" width="2" height="3" fill="#00f"/><rect x="9" y="13" width="3" height="2" fill="#ff0"/><rect x="13" y="13" width="2" height="2" fill="#0a0"/></svg><div style="left:1252px;top:130px;width:23px;height:21px;background:#c0c0c0;"></div><div style="left:1252px;top:130px;width:23px;height:1px;background:#fff;"></div><div style="left:1252px;top:130px;width:1px;height:21px;background:#fff;"></div><div style="left:1252px;top:150px;width:23px;height:1px;background:#808080;"></div><div style="left:1274px;top:130px;width:1px;height:21px;background:#808080;"></div><div style="left:1253px;top:131px;width:20px;height:1px;background:#e8e8e8;"></div><div style="left:1253px;top:131px;width:1px;height:18px;background:#e8e8e8;"></div><svg style="left:1255px;top:133px" width="16" height="16" viewBox="0 0 16 16" shape-rendering="crispEdges" ><g shape-rendering="auto"><rect x="0" y="0" width="16" height="16" fill="#000080"/><rect x="2" y="2" width="12" height="12" fill="none" stroke="#fff" stroke-width="1.200"/><text x="8" y="12.500" text-anchor="middle" font-family="Liberation Sans,sans-serif" font-weight="bold" font-size="11" fill="#fff">W</text></g></svg><div style="left:1252px;top:152px;width:23px;height:21px;background:#c0c0c0;"></div><div style="left:1252px;top:152px;width:23px;height:1px;background:#fff;"></div><div style="left:1252px;top:152px;width:1px;height:21px;background:#fff;"></div><div style="left:1252px;top:172px;width:23px;height:1px;background:#808080;"></div><div style="left:1274px;top:152px;width:1px;height:21px;background:#808080;"></div><div style="left:1253px;top:153px;width:20px;height:1px;background:#e8e8e8;"></div><div style="left:1253px;top:153px;width:1px;height:18px;background:#e8e8e8;"></div><svg style="left:1255px;top:155px" width="16" height="16" viewBox="0 0 16 16" shape-rendering="crispEdges" ><g shape-rendering="auto"><rect x="0" y="0" width="16" height="16" fill="#208020"/><rect x="2" y="2" width="12" height="12" fill="none" stroke="#c0e0c0" stroke-width="1.200"/><text x="8" y="12.500" text-anchor="middle" font-family="Liberation Sans,sans-serif" font-weight="bold" font-size="11" fill="#c0e0c0">X</text></g></svg><div style="left:1252px;top:174px;width:23px;height:21px;background:#c0c0c0;"></div><div style="left:1252px;top:174px;width:23px;height:1px;background:#fff;"></div><div style="left:1252px;top:174px;width:1px;height:21px;background:#fff;"></div><div style="left:1252px;top:194px;width:23px;height:1px;background:#808080;"></div><div style="left:1274px;top:174px;width:1px;height:21px;background:#808080;"></div><div style="left:1253px;top:175px;width:20px;height:1px;background:#e8e8e8;"></div><div style="left:1253px;top:175px;width:1px;height:18px;background:#e8e8e8;"></div><svg style="left:1255px;top:177px" width="16" height="16" viewBox="0 0 16 16" shape-rendering="crispEdges" ><g shape-rendering="auto"><rect x="0" y="0" width="16" height="16" fill="#d04010"/><rect x="2" y="2" width="12" height="12" fill="none" stroke="#ffe0d0" stroke-width="1.200"/><text x="8" y="12.500" text-anchor="middle" font-family="Liberation Sans,sans-serif" font-weight="bold" font-size="11" fill="#ffe0d0">C</text></g></svg><div style="left:1252px;top:196px;width:23px;height:21px;background:#c0c0c0;"></div><div style="left:1252px;top:196px;width:23px;height:1px;background:#fff;"></div><div style="left:1252px;top:196px;width:1px;height:21px;background:#fff;"></div><div style="left:1252px;top:216px;width:23px;height:1px;background:#808080;"></div><div style="left:1274px;top:196px;width:1px;height:21px;background:#808080;"></div><div style="left:1253px;top:197px;width:20px;height:1px;background:#e8e8e8;"></div><div style="left:1253px;top:197px;width:1px;height:18px;background:#e8e8e8;"></div><svg style="left:1255px;top:199px" width="16" height="16" viewBox="0 0 16 16" shape-rendering="crispEdges" ><g shape-rendering="auto"><rect x="3.500" y="1.500" width="11" height="12" fill="#fff" stroke="#000"/><rect x="3" y="1" width="12" height="3" fill="#e0d000"/><rect x="0" y="4" width="8" height="7" fill="#000"/><rect x="1" y="5" width="2.500" height="2.500" fill="#f00"/><rect x="4.500" y="5" width="2.500" height="2.500" fill="#00f"/><rect x="1" y="8" width="2.500" height="2" fill="#ff0"/><rect x="4.500" y="8" width="2.500" height="2" fill="#0a0"/><path d="M4 14.500h11" stroke="#808080"/></g></svg><div style="left:1252px;top:218px;width:23px;height:21px;background:#c0c0c0;"></div><div style="left:1252px;top:218px;width:23px;height:1px;background:#fff;"></div><div style="left:1252px;top:218px;width:1px;height:21px;background:#fff;"></div><div style="left:1252px;top:238px;width:23px;height:1px;background:#808080;"></div><div style="left:1274px;top:218px;width:1px;height:21px;background:#808080;"></div><div style="left:1253px;top:219px;width:20px;height:1px;background:#e8e8e8;"></div><div style="left:1253px;top:219px;width:1px;height:18px;background:#e8e8e8;"></div><svg style="left:1255px;top:221px" width="16" height="16" viewBox="0 0 16 16" shape-rendering="crispEdges" ><g shape-rendering="auto"><rect x="0" y="0" width="16" height="16" fill="#000060"/><rect x="2" y="2" width="12" height="12" fill="none" stroke="#fff" stroke-width="1.200"/><text x="8" y="12.500" text-anchor="middle" font-family="Liberation Sans,sans-serif" font-weight="bold" font-size="11" fill="#fff">&amp;</text></g></svg><div style="left:1252px;top:240px;width:23px;height:21px;background:#c0c0c0;"></div><div style="left:1252px;top:240px;width:23px;height:1px;background:#fff;"></div><div style="left:1252px;top:240px;width:1px;height:21px;background:#fff;"></div><div style="left:1252px;top:260px;width:23px;height:1px;background:#808080;"></div><div style="left:1274px;top:240px;width:1px;height:21px;background:#808080;"></div><div style="left:1253px;top:241px;width:20px;height:1px;background:#e8e8e8;"></div><div style="left:1253px;top:241px;width:1px;height:18px;background:#e8e8e8;"></div><svg style="left:1255px;top:243px" width="16" height="16" viewBox="0 0 16 16" shape-rendering="crispEdges" ><g shape-rendering="auto"><rect width="16" height="16" fill="#900040"/><rect x="2" y="2" width="12" height="12" fill="none" stroke="#fff" stroke-width="1.200"/><circle cx="10" cy="6" r="2.500" fill="none" stroke="#fff" stroke-width="1.800"/><path d="M8 8l-4 4.500" stroke="#fff" stroke-width="2"/></g></svg><div style="left:1252px;top:267px;width:23px;height:21px;background:#c0c0c0;"></div><div style="left:1252px;top:267px;width:23px;height:1px;background:#fff;"></div><div style="left:1252px;top:267px;width:1px;height:21px;background:#fff;"></div><div style="left:1252px;top:287px;width:23px;height:1px;background:#808080;"></div><div style="left:1274px;top:267px;width:1px;height:21px;background:#808080;"></div><div style="left:1253px;top:268px;width:20px;height:1px;background:#e8e8e8;"></div><div style="left:1253px;top:268px;width:1px;height:18px;background:#e8e8e8;"></div><svg style="left:1255px;top:270px" width="16" height="16" viewBox="0 0 16 16" shape-rendering="crispEdges" ><g shape-rendering="auto"><rect width="16" height="16" fill="#0000f0"/><path d="M3 3h4M3 3v4M3 3l4 4M13 13h-4M13 13v-4M13 13l-4-4M13 3h-3M13 3v3M3 13h3M3 13v-3" stroke="#fff" stroke-width="2" fill="none"/></g></svg><div style="left:1252px;top:294px;width:23px;height:21px;background:#c0c0c0;"></div><div style="left:1252px;top:294px;width:23px;height:1px;background:#fff;"></div><div style="left:1252px;top:294px;width:1px;height:21px;background:#fff;"></div><div style="left:1252px;top:314px;width:23px;height:1px;background:#808080;"></div><div style="left:1274px;top:294px;width:1px;height:21px;background:#808080;"></div><div style="left:1253px;top:295px;width:20px;height:1px;background:#e8e8e8;"></div><div style="left:1253px;top:295px;width:1px;height:18px;background:#e8e8e8;"></div><svg style="left:1255px;top:297px" width="16" height="16" viewBox="0 0 16 16" shape-rendering="crispEdges" ><g shape-rendering="auto"><rect x="0" y="0" width="16" height="16" fill="#008080"/><rect x="2" y="2" width="12" height="12" fill="none" stroke="#fff" stroke-width="1.200"/><text x="8" y="12.500" text-anchor="middle" font-family="Liberation Sans,sans-serif" font-weight="bold" font-size="11" fill="#fff">E</text></g></svg><div style="left:1252px;top:321px;width:23px;height:21px;background:#c0c0c0;"></div><div style="left:1252px;top:321px;width:23px;height:1px;background:#fff;"></div><div style="left:1252px;top:321px;width:1px;height:21px;background:#fff;"></div><div style="left:1252px;top:341px;width:23px;height:1px;background:#808080;"></div><div style="left:1274px;top:321px;width:1px;height:21px;background:#808080;"></div><div style="left:1253px;top:322px;width:20px;height:1px;background:#e8e8e8;"></div><div style="left:1253px;top:322px;width:1px;height:18px;background:#e8e8e8;"></div><svg style="left:1255px;top:324px" width="16" height="16" viewBox="0 0 16 16" shape-rendering="crispEdges" ><g shape-rendering="auto"><rect x="1.500" y="4.500" width="13" height="8" fill="#f0e880" stroke="#000"/><path d="M1.500 4.500l6.500 5 6.500-5M1.500 12.500l4.500-4M14.500 12.500l-4.500-4" fill="none" stroke="#000"/></g></svg><div style="left:1252px;top:343px;width:23px;height:21px;background:#c0c0c0;"></div><div style="left:1252px;top:343px;width:23px;height:1px;background:#fff;"></div><div style="left:1252px;top:343px;width:1px;height:21px;background:#fff;"></div><div style="left:1252px;top:363px;width:23px;height:1px;background:#808080;"></div><div style="left:1274px;top:343px;width:1px;height:21px;background:#808080;"></div><div style="left:1253px;top:344px;width:20px;height:1px;background:#e8e8e8;"></div><div style="left:1253px;top:344px;width:1px;height:18px;background:#e8e8e8;"></div><svg style="left:1255px;top:346px" width="16" height="16" viewBox="0 0 16 16" shape-rendering="crispEdges" ><g shape-rendering="auto"><rect x="3.500" y="2.500" width="10" height="12" fill="#fff" stroke="#000" stroke-width="1.400"/><rect x="6" y="1" width="5" height="3" fill="#808080" stroke="#000" stroke-width=".6"/><path d="M5 9l2.500 3 4.500-6" fill="none" stroke="#c00000" stroke-width="1.800"/></g></svg><div style="left:1252px;top:365px;width:23px;height:21px;background:#c0c0c0;"></div><div style="left:1252px;top:365px;width:23px;height:1px;background:#fff;"></div><div style="left:1252px;top:365px;width:1px;height:21px;background:#fff;"></div><div style="left:1252px;top:385px;width:23px;height:1px;background:#808080;"></div><div style="left:1274px;top:365px;width:1px;height:21px;background:#808080;"></div><div style="left:1253px;top:366px;width:20px;height:1px;background:#e8e8e8;"></div><div style="left:1253px;top:366px;width:1px;height:18px;background:#e8e8e8;"></div><svg style="left:1255px;top:368px" width="16" height="16" viewBox="0 0 16 16" shape-rendering="crispEdges" ><g shape-rendering="auto"><rect x="1.500" y="3.500" width="13" height="9" fill="#e0e0e0" stroke="#404040"/><rect x="3" y="5" width="3" height="4" fill="#fff" stroke="#000" stroke-width=".8"/><path d="M8 6h5M8 8h5M8 10h5" stroke="#000080"/></g></svg><div style="left:1252px;top:387px;width:23px;height:21px;background:#c0c0c0;"></div><div style="left:1252px;top:387px;width:23px;height:1px;background:#fff;"></div><div style="left:1252px;top:387px;width:1px;height:21px;background:#fff;"></div><div style="left:1252px;top:407px;width:23px;height:1px;background:#808080;"></div><div style="left:1274px;top:387px;width:1px;height:21px;background:#808080;"></div><div style="left:1253px;top:388px;width:20px;height:1px;background:#e8e8e8;"></div><div style="left:1253px;top:388px;width:1px;height:18px;background:#e8e8e8;"></div><svg style="left:1255px;top:390px" width="16" height="16" viewBox="0 0 16 16" shape-rendering="crispEdges" ><g shape-rendering="auto"><path d="M2 6l9-4 4 8-9 4z" fill="#f0e860" stroke="#807000" stroke-width=".8"/><path d="M5 6l6-2.500M6 8l6-2.500M7 10l6-2.500" stroke="#b0a030" stroke-width=".8"/></g></svg><div style="left:1252px;top:409px;width:23px;height:21px;background:#c0c0c0;"></div><div style="left:1252px;top:409px;width:23px;height:1px;background:#fff;"></div><div style="left:1252px;top:409px;width:1px;height:21px;background:#fff;"></div><div style="left:1252px;top:429px;width:23px;height:1px;background:#808080;"></div><div style="left:1274px;top:409px;width:1px;height:21px;background:#808080;"></div><div style="left:1253px;top:410px;width:20px;height:1px;background:#e8e8e8;"></div><div style="left:1253px;top:410px;width:1px;height:18px;background:#e8e8e8;"></div><svg style="left:1255px;top:412px" width="16" height="16" viewBox="0 0 16 16" shape-rendering="crispEdges" ><g><rect x="1" y="1" width="14" height="3" fill="#000080"/><rect x="1" y="4" width="14" height="11" fill="#fff"/><path d="M1 7.500h14M1 11.500h14M4.500 4v11M8.500 4v11M12.500 4v11" stroke="#a0a0a0"/><rect x="9.500" y="7.500" width="3" height="3" fill="none" stroke="#c00000" stroke-width="1.400"/></g></svg><div style="left:1252px;top:431px;width:23px;height:21px;background:#c0c0c0;"></div><div style="left:1252px;top:431px;width:23px;height:1px;background:#fff;"></div><div style="left:1252px;top:431px;width:1px;height:21px;background:#fff;"></div><div style="left:1252px;top:451px;width:23px;height:1px;background:#808080;"></div><div style="left:1274px;top:431px;width:1px;height:21px;background:#808080;"></div><div style="left:1253px;top:432px;width:20px;height:1px;background:#e8e8e8;"></div><div style="left:1253px;top:432px;width:1px;height:18px;background:#e8e8e8;"></div><svg style="left:1255px;top:434px" width="16" height="16" viewBox="0 0 16 16" shape-rendering="crispEdges" ><g shape-rendering="auto"><path d="M1 4l3.500-1.500 3.500 1.500v10l-3.500-1.500L1 14z" fill="#fff" stroke="#404040" stroke-width=".8"/><path d="M8 7h6v8H8z" fill="#fff" stroke="#000080" stroke-width=".8"/><path d="M9 9h4M9 11h4M9 13h4" stroke="#000080" stroke-width=".8"/><circle cx="11.500" cy="4" r="3.200" fill="#fff" stroke="#000" stroke-width="1"/><path d="M11.500 2v2h1.500" stroke="#000" fill="none" stroke-width=".8"/></g></svg><div style="left:1252px;top:458px;width:23px;height:21px;background:#c0c0c0;"></div><div style="left:1252px;top:458px;width:23px;height:1px;background:#fff;"></div><div style="left:1252px;top:458px;width:1px;height:21px;background:#fff;"></div><div style="left:1252px;top:478px;width:23px;height:1px;background:#808080;"></div><div style="left:1274px;top:458px;width:1px;height:21px;background:#808080;"></div><div style="left:1253px;top:459px;width:20px;height:1px;background:#e8e8e8;"></div><div style="left:1253px;top:459px;width:1px;height:18px;background:#e8e8e8;"></div><svg style="left:1255px;top:461px" width="16" height="16" viewBox="0 0 16 16" shape-rendering="crispEdges" ><g shape-rendering="auto"><rect width="16" height="16" fill="#808000"/><circle cx="8" cy="8" r="4.500" fill="none" stroke="#e0e0a0" stroke-width="2"/><path d="M8 5v3.500h2.500" fill="none" stroke="#e0e0a0" stroke-width="1.600"/><path d="M1.500 1.500h3M1.500 1.500v3M14.500 1.500h-3M14.500 1.500v3M1.500 14.500h3M1.500 14.500v-3M14.500 14.500h-3M14.500 14.500v-3" stroke="#e0e0a0" stroke-width="1.400"/></g></svg><div style="left:1252px;top:485px;width:23px;height:21px;background:#c0c0c0;"></div><div style="left:1252px;top:485px;width:23px;height:1px;background:#fff;"></div><div style="left:1252px;top:485px;width:1px;height:21px;background:#fff;"></div><div style="left:1252px;top:505px;width:23px;height:1px;background:#808080;"></div><div style="left:1274px;top:485px;width:1px;height:21px;background:#808080;"></div><div style="left:1253px;top:486px;width:20px;height:1px;background:#e8e8e8;"></div><div style="left:1253px;top:486px;width:1px;height:18px;background:#e8e8e8;"></div><svg style="left:1255px;top:488px" width="16" height="16" viewBox="0 0 16 16" shape-rendering="crispEdges" ><g shape-rendering="auto"><path d="M2.500 3.500h8v11h-8z" fill="#c0c0c0" stroke="#000"/><path d="M10.500 3.500l3-2.500v11l-3 2.500" fill="#808080" stroke="#000" stroke-width=".8"/><path d="M2.500 3.500l3-2.500h8" fill="none" stroke="#000" stroke-width=".8"/><rect x="4" y="9" width="5" height="4" fill="#808080"/><rect x="4" y="4.500" width="5" height="3" fill="#fff"/></g></svg><div style="left:1252px;top:507px;width:23px;height:21px;background:#c0c0c0;"></div><div style="left:1252px;top:507px;width:23px;height:1px;background:#fff;"></div><div style="left:1252px;top:507px;width:1px;height:21px;background:#fff;"></div><div style="left:1252px;top:527px;width:23px;height:1px;background:#808080;"></div><div style="left:1274px;top:507px;width:1px;height:21px;background:#808080;"></div><div style="left:1253px;top:508px;width:20px;height:1px;background:#e8e8e8;"></div><div style="left:1253px;top:508px;width:1px;height:18px;background:#e8e8e8;"></div><svg style="left:1255px;top:510px" width="16" height="16" viewBox="0 0 16 16" shape-rendering="crispEdges" ><g shape-rendering="auto"><path d="M1 3l1-2h5l1 2h6v9H1z" fill="#f0e080" stroke="#807000"/><circle cx="6.500" cy="5.500" r="3.500" fill="#80f0ff" stroke="#000"/><path d="M9 8l5 5.500" stroke="#0000c0" stroke-width="2.400"/></g></svg><div style="left:1252px;top:529px;width:23px;height:21px;background:#c0c0c0;"></div><div style="left:1252px;top:529px;width:23px;height:1px;background:#fff;"></div><div style="left:1252px;top:529px;width:1px;height:21px;background:#fff;"></div><div style="left:1252px;top:549px;width:23px;height:1px;background:#808080;"></div><div style="left:1274px;top:529px;width:1px;height:21px;background:#808080;"></div><div style="left:1253px;top:530px;width:20px;height:1px;background:#e8e8e8;"></div><div style="left:1253px;top:530px;width:1px;height:18px;background:#e8e8e8;"></div><svg style="left:1255px;top:532px" width="16" height="16" viewBox="0 0 16 16" shape-rendering="crispEdges" ><g><rect width="16" height="16" fill="#000"/><rect x="8" y="2" width="7" height="12" fill="#0000c0"/><path d="M9 4h5M9 7h5M9 10h5M11.500 4v8" stroke="#00c0c0"/><path d="M0 15.500h16M0 0.500h8" stroke="#008080" stroke-dasharray="1 1"/></g></svg><div style="left:1254px;top:813px;width:22px;height:80px;"><div style="left:22px;top:0;transform:rotate(90deg);transform-origin:0 0;font:italic bold 16px/20px 'Liberation Sans',sans-serif;color:#787878;white-space:pre;">Microsoft</div></div><div style="left:1249px;top:898px;width:29px;height:1px;background:#808080;"></div><div style="left:1249px;top:899px;width:29px;height:1px;background:#000;"></div><div style="left:1249px;top:900px;width:29px;height:2px;background:#fff;"></div><div style="left:1249px;top:902px;width:29px;height:28px;background:#8080ff;"></div><div style="left:1251px;top:904px;width:24px;height:24px;background:#c0c0c0;"></div><div style="left:1251px;top:904px;width:23px;height:1px;background:#fff;"></div><div style="left:1251px;top:904px;width:1px;height:23px;background:#fff;"></div><div style="left:1251px;top:927px;width:24px;height:1px;background:#000;"></div><div style="left:1274px;top:904px;width:1px;height:24px;background:#000;"></div><div style="left:1252px;top:926px;width:22px;height:1px;background:#808080;"></div><div style="left:1273px;top:905px;width:1px;height:22px;background:#808080;"></div><svg style="left:1255px;top:908px" width="16" height="16" viewBox="0 0 16 16" shape-rendering="crispEdges" ><g shape-rendering="auto"><path d="M0.500 3.500l2-3h4l2 3h6v10h-14z" fill="#c0c0c0" stroke="#707000" stroke-width="1"/><path d="M1.500 4.500h12M1.500 4.500v8" stroke="#fff" fill="none"/><path d="M1 14h14.500v-10" stroke="#000" fill="none" stroke-width=".8"/></g></svg><div style="left:1249px;top:930px;width:29px;height:2px;background:#000;"></div><div style="left:1249px;top:932px;width:29px;height:2px;background:#fff;"></div><div style="left:1249px;top:934px;width:29px;height:28px;background:#ffff00;"></div><div style="left:1251px;top:936px;width:24px;height:24px;background:#c0c0c0;"></div><div style="left:1251px;top:936px;width:23px;height:1px;background:#fff;"></div><div style="left:1251px;top:936px;width:1px;height:23px;background:#fff;"></div><div style="left:1251px;top:959px;width:24px;height:1px;background:#000;"></div><div style="left:1274px;top:936px;width:1px;height:24px;background:#000;"></div><div style="left:1252px;top:958px;width:22px;height:1px;background:#808080;"></div><div style="left:1273px;top:937px;width:1px;height:22px;background:#808080;"></div><svg style="left:1255px;top:940px" width="16" height="16" viewBox="0 0 16 16" shape-rendering="crispEdges" ><g shape-rendering="auto"><path d="M0.500 3.500l2-3h4l2 3h6v10h-14z" fill="#c0c0c0" stroke="#707000" stroke-width="1"/><path d="M1.500 4.500h12M1.500 4.500v8" stroke="#fff" fill="none"/><path d="M1 14h14.500v-10" stroke="#000" fill="none" stroke-width=".8"/></g></svg><div style="left:1249px;top:962px;width:29px;height:2px;background:#000;"></div><div style="left:1249px;top:964px;width:29px;height:2px;background:#fff;"></div><div style="left:1249px;top:966px;width:29px;height:28px;background:#000080;"></div><div style="left:1251px;top:968px;width:24px;height:24px;background:#c0c0c0;"></div><div style="left:1251px;top:968px;width:23px;height:1px;background:#fff;"></div><div style="left:1251px;top:968px;width:1px;height:23px;background:#fff;"></div><div style="left:1251px;top:991px;width:24px;height:1px;background:#000;"></div><div style="left:1274px;top:968px;width:1px;height:24px;background:#000;"></div><div style="left:1252px;top:990px;width:22px;height:1px;background:#808080;"></div><div style="left:1273px;top:969px;width:1px;height:22px;background:#808080;"></div><svg style="left:1255px;top:971px" width="16" height="16" viewBox="0 0 16 16" shape-rendering="crispEdges" ><g shape-rendering="auto"><path d="M0.500 3.500l2-3h4l2 3h6v10h-14z" fill="#c0c0c0" stroke="#707000" stroke-width="1"/><path d="M1.500 4.500h12M1.500 4.500v8" stroke="#fff" fill="none"/><path d="M1 14h14.500v-10" stroke="#000" fill="none" stroke-width=".8"/></g><rect x="5.500" y="7.500" width="10" height="8" fill="#fff" stroke="#000080" shape-rendering="auto"/><rect x="5" y="7" width="11" height="2" fill="#000080"/><rect x="8" y="11" width="2" height="2" fill="#f00"/><rect x="11" y="11" width="2" height="2" fill="#00a0a0"/></svg><div style="left:1249px;top:994px;width:29px;height:2px;background:#000;"></div><div style="left:271px;top:249px;width:738px;height:526px;background:#c0c0c0;"></div><div style="left:271px;top:249px;width:737px;height:1px;background:#dfdfdf;"></div><div style="left:271px;top:249px;width:1px;height:525px;background:#dfdfdf;"></div><div style="left:272px;top:250px;width:735px;height:1px;background:#fff;"></div><div style="left:272px;top:250px;width:1px;height:523px;background:#fff;"></div><div style="left:271px;top:774px;width:738px;height:1px;background:#000;"></div><div style="left:1008px;top:249px;width:1px;height:526px;background:#000;"></div><div style="left:272px;top:773px;width:736px;height:1px;background:#808080;"></div><div style="left:1007px;top:250px;width:1px;height:524px;background:#808080;"></div><div style="left:274px;top:252px;width:732px;height:18px;background:linear-gradient(to right,#000080 0%,#000080 8%,#1084d0 100%);"></div><svg style="left:276px;top:253px" width="18" height="16" viewBox="0 0 18 16" shape-rendering="crispEdges" ><g shape-rendering="auto"><text x="0" y="6" font-family="Liberation Sans,sans-serif" font-size="7" fill="#0000ff">c</text><path d="M4.500 4.500l6 2.500 4.500 6-3 3-5.500-5z" fill="#e0e0e0" stroke="#000" stroke-width="1"/><path d="M9 11l3-3M11 13.500l2.500-2.500" stroke="#00d0d0" stroke-width="1.500"/><path d="M4.500 4.500l1.500 1.500" stroke="#fff" stroke-width="1.500"/></g></svg><div style="left:293.5px;top:254.15px;font:bold 14px/14px 'Liberation Sans',sans-serif;color:#fff;white-space:pre;letter-spacing:0.27px;">Vypalování signatur</div><div style="left:988px;top:254px;width:16px;height:14px;background:#c0c0c0;"></div><div style="left:988px;top:254px;width:15px;height:1px;background:#fff;"></div><div style="left:988px;top:254px;width:1px;height:13px;background:#fff;"></div><div style="left:988px;top:267px;width:16px;height:1px;background:#000;"></div><div style="left:1003px;top:254px;width:1px;height:14px;background:#000;"></div><div style="left:989px;top:266px;width:14px;height:1px;background:#808080;"></div><div style="left:1002px;top:255px;width:1px;height:12px;background:#808080;"></div><svg style="left:988px;top:254px" width="16" height="14" viewBox="0 0 16 14" shape-rendering="crispEdges" ><path d="M4 3h2v1h1v1h2v-1h1v-1h2v1h-1v1h-1v1h-1v1h1v1h1v1h1v1h-2v-1h-1v-1h-2v1h-1v1h-2v-1h1v-1h1v-1h1v-1h-1v-1h-1v-1h-1z" fill="#000"/></svg><div style="left:278px;top:277px;width:720px;height:1px;background:#808080;"></div><div style="left:278px;top:277px;width:1px;height:490px;background:#808080;"></div><div style="left:279px;top:278px;width:719px;height:1px;background:#fff;"></div><div style="left:279px;top:278px;width:1px;height:489px;background:#fff;"></div><div style="left:278px;top:766px;width:720px;height:1px;background:#808080;"></div><div style="left:997px;top:277px;width:1px;height:490px;background:#808080;"></div><div style="left:278px;top:767px;width:721px;height:1px;background:#fff;"></div><div style="left:998px;top:277px;width:1px;height:491px;background:#fff;"></div><div id="img" style="left:281px;top:280px;width:629px;height:307px;background:#fff;overflow:hidden;"><div class="card" style="left:54.0px;top:98.7px;font-size:16.00px;line-height:16.00px;letter-spacing:0.03px;transform:rotate(0.17deg);transform-origin:0 80%;">T E N D R J A K O V, Vladimir</div><div class="card" style="left:388.2px;top:99.5px;font-size:16.00px;line-height:16.00px;letter-spacing:0.03px;transform:rotate(0.17deg);transform-origin:0 80%;">T 81622</div><div class="card" style="left:253.6px;top:116.7px;font-size:16.00px;line-height:16.00px;letter-spacing:0.03px;transform:rotate(0.17deg);transform-origin:0 80%;">Fedorovič</div><div class="card" style="left:54.0px;top:142.7px;font-size:16.00px;line-height:16.00px;letter-spacing:-0.01px;transform:rotate(0.17deg);transform-origin:0 80%;">Sobranije sočinenij v 4 tomach. Vstup.stat´ja</div><div class="card" style="left:54.0px;top:160.2px;font-size:16.00px;line-height:16.00px;letter-spacing:0.03px;transform:rotate(0.17deg);transform-origin:0 80%;">Je.Sidorova.</div><div class="card" style="left:54.0px;top:177.7px;font-size:16.00px;line-height:16.00px;letter-spacing:0.03px;transform:rotate(0.17deg);transform-origin:0 80%;">Moskva, Chudožestv.lit. 1978-80. 4 sv.</div><div class="card" style="left:54.0px;top:204.3px;font-size:16.00px;line-height:16.00px;letter-spacing:0.03px;transform:rotate(0.17deg);transform-origin:0 80%;">T.1.: Povesti. 1978. 492 s.</div><div class="card" style="left:54.0px;top:222.1px;font-size:16.00px;line-height:16.00px;letter-spacing:0.03px;transform:rotate(0.17deg);transform-origin:0 80%;">  2.: Romany. 1979. 612 s.</div><div class="card" style="left:54.0px;top:239.7px;font-size:16.00px;line-height:16.00px;letter-spacing:0.03px;transform:rotate(0.17deg);transform-origin:0 80%;">  3.: Roman. Očerk. 1980. 474 s.</div><div class="card" style="left:54.0px;top:257.4px;font-size:16.00px;line-height:16.00px;letter-spacing:0.03px;transform:rotate(0.17deg);transform-origin:0 80%;">  4.: Povesti. 1980. 701 s.</div><div class="card" style="left:378.0px;top:205.7px;font-size:16.00px;line-height:16.00px;letter-spacing:0.03px;transform:rotate(0.17deg);transform-origin:0 80%;">Vým. 1951/79</div><div class="card" style="left:378.0px;top:223.5px;font-size:16.00px;line-height:16.00px;letter-spacing:0.03px;transform:rotate(0.17deg);transform-origin:0 80%;">Vým. 7423/79</div><div class="card" style="left:378.0px;top:241.1px;font-size:16.00px;line-height:16.00px;letter-spacing:0.03px;transform:rotate(0.17deg);transform-origin:0 80%;">Vým. 5674/80</div><div class="card" style="left:378.0px;top:258.8px;font-size:16.00px;line-height:16.00px;letter-spacing:0.03px;transform:rotate(0.17deg);transform-origin:0 80%;">Vým. 1037/81</div><svg style="left:0px;top:0px" width="629" height="307" shape-rendering="crispEdges"><g fill="#333"><rect x="500.0" y="240.0" width="1.6" height="1.0"/><rect x="505.0" y="246.0" width="1.0" height="1.6"/><rect x="520.0" y="250.0" width="1.6" height="1.0"/><rect x="498.0" y="262.0" width="1.6" height="1.0"/><rect x="508.0" y="268.0" width="1.0" height="1.0"/><rect x="486.0" y="276.0" width="1.6" height="1.0"/><rect x="14.0" y="228.0" width="4.8" height="1.0"/><rect x="24.0" y="229.0" width="3.2" height="1.0"/><rect x="34.0" y="228.0" width="2.4" height="1.0"/><rect x="44.0" y="229.0" width="1.6" height="1.0"/><rect x="70.0" y="230.0" width="8.0" height="1.0"/><rect x="84.0" y="229.0" width="6.4" height="1.0"/><rect x="96.0" y="230.0" width="4.8" height="1.0"/><rect x="40.0" y="244.0" width="3.2" height="1.0"/><rect x="50.0" y="246.0" width="2.4" height="1.0"/><rect x="60.0" y="247.0" width="1.6" height="1.6"/><rect x="8.0" y="259.0" width="1.6" height="1.6"/><rect x="66.0" y="262.0" width="1.6" height="1.0"/><rect x="80.0" y="262.0" width="2.4" height="1.0"/><rect x="96.0" y="266.0" width="1.6" height="1.0"/><rect x="105.0" y="264.0" width="1.6" height="1.0"/><rect x="240.0" y="232.0" width="2.4" height="1.0"/><rect x="250.0" y="231.0" width="3.2" height="1.0"/><rect x="262.0" y="232.0" width="4.0" height="1.0"/><rect x="270.0" y="231.0" width="4.8" height="1.0"/><rect x="282.0" y="232.0" width="3.2" height="1.0"/><rect x="292.0" y="233.0" width="4.0" height="1.0"/><rect x="455.0" y="233.0" width="2.4" height="1.0"/><rect x="462.0" y="234.0" width="3.2" height="1.0"/><rect x="470.0" y="233.0" width="4.0" height="1.0"/><rect x="480.0" y="234.0" width="3.2" height="1.0"/><rect x="490.0" y="233.0" width="2.4" height="1.0"/><rect x="500.0" y="234.0" width="4.8" height="1.0"/><rect x="512.0" y="235.0" width="2.4" height="1.0"/><rect x="520.0" y="236.0" width="1.6" height="1.0"/><rect x="494.0" y="252.0" width="2.4" height="1.6"/><rect x="500.0" y="254.0" width="1.6" height="1.0"/><rect x="506.0" y="253.0" width="1.6" height="1.6"/><rect x="496.0" y="270.0" width="2.4" height="1.0"/><rect x="504.0" y="271.0" width="1.6" height="1.0"/><rect x="520.0" y="268.0" width="1.6" height="2.4"/><rect x="528.0" y="250.0" width="1.0" height="1.0"/><rect x="268.0" y="284.0" width="1.6" height="1.0"/><rect x="272.0" y="286.0" width="1.6" height="1.6"/><rect x="180.0" y="296.0" width="1.0" height="1.0"/><rect x="360.0" y="300.0" width="1.0" height="1.0"/><rect x="420.0" y="298.0" width="1.0" height="1.0"/><rect x="470.0" y="295.0" width="6.4" height="1.0"/><rect x="480.0" y="296.0" width="4.8" height="1.0"/><rect x="488.0" y="295.0" width="3.2" height="1.0"/><rect x="494.0" y="297.0" width="2.4" height="1.6"/><rect x="500.0" y="296.0" width="1.6" height="1.0"/><rect x="495" y="72" width="2" height="1"/><rect x="504" y="72" width="2" height="1"/><rect x="436" y="87" width="2" height="1"/><rect x="511" y="84" width="1" height="2"/><rect x="501" y="132" width="2" height="1"/><rect x="520" y="137" width="2" height="2"/><rect x="257" y="83" width="2" height="1"/><rect x="269" y="89" width="1" height="2"/><rect x="291" y="90" width="1" height="2"/><rect x="527" y="262" width="1" height="3"/><rect x="74" y="29" width="2" height="2"/><rect x="51" y="64" width="1" height="2"/><rect x="51" y="66" width="2" height="2"/><rect x="25" y="88" width="2" height="2"/><rect x="26" y="89" width="2" height="1"/><rect x="34" y="90" width="1" height="2"/><rect x="25" y="111" width="2" height="2"/><rect x="266" y="24" width="2" height="2"/><rect x="281" y="33" width="4" height="1"/><rect x="291" y="33" width="3" height="1"/><rect x="329" y="28" width="3" height="2"/><rect x="508" y="7" width="1" height="2"/><rect x="494" y="73" width="2" height="1"/><rect x="511" y="233" width="2" height="1"/><rect x="520" y="235" width="2" height="1"/><rect x="530" y="233" width="2" height="1"/><rect x="509" y="254" width="2" height="2"/><rect x="537" y="255" width="1" height="2"/><rect x="528" y="264" width="1" height="2"/><rect x="529" y="266" width="1" height="3"/><rect x="24" y="228" width="2" height="1"/><rect x="29" y="228" width="2" height="1"/><rect x="34" y="228" width="2" height="1"/><rect x="40" y="228" width="2" height="1"/><rect x="45" y="228" width="2" height="1"/><rect x="94" y="228" width="2" height="1"/><rect x="98" y="228" width="2" height="1"/><rect x="101" y="228" width="2" height="1"/><rect x="104" y="228" width="2" height="1"/><rect x="107" y="228" width="2" height="1"/><rect x="58" y="241" width="2" height="1"/><rect x="65" y="241" width="2" height="2"/><rect x="67" y="241" width="2" height="1"/><rect x="85" y="243" width="2" height="2"/><rect x="88" y="245" width="2" height="1"/><rect x="90" y="247" width="3" height="2"/><rect x="94" y="246" width="2" height="2"/><rect x="90" y="258" width="1" height="2"/><rect x="93" y="257" width="1" height="2"/><rect x="86" y="260" width="1" height="2"/><rect x="95" y="260" width="2" height="1"/><rect x="101" y="259" width="1" height="4"/><rect x="99" y="266" width="2" height="1"/><rect x="90" y="263" width="2" height="1"/></g><g fill="#999"><rect x="500" y="73" width="1" height="1"/><rect x="508" y="73" width="1" height="1"/><rect x="447" y="79" width="1" height="1"/><rect x="475" y="78" width="1" height="1"/><rect x="511" y="88" width="1" height="1"/><rect x="484" y="97" width="1" height="1"/><rect x="456" y="97" width="1" height="1"/><rect x="324" y="95" width="1" height="1"/><rect x="331" y="99" width="1" height="1"/><rect x="394" y="171" width="1" height="1"/><rect x="441" y="186" width="1" height="1"/><rect x="455" y="186" width="1" height="1"/><rect x="353" y="224" width="1" height="1"/><rect x="323" y="232" width="1" height="1"/><rect x="511" y="223" width="1" height="1"/><rect x="527" y="244" width="1" height="1"/><rect x="538" y="256" width="1" height="1"/><rect x="31" y="16" width="1" height="1"/><rect x="70" y="26" width="1" height="1"/><rect x="9" y="59" width="1" height="1"/><rect x="84" y="58" width="1" height="1"/><rect x="29" y="68" width="1" height="1"/><rect x="51" y="72" width="2" height="1"/><rect x="51" y="74" width="2" height="1"/><rect x="62" y="72" width="1" height="1"/><rect x="49" y="77" width="1" height="1"/><rect x="19" y="92" width="1" height="1"/><rect x="15" y="94" width="1" height="1"/><rect x="16" y="95" width="1" height="1"/><rect x="44" y="140" width="1" height="1"/><rect x="196" y="20" width="1" height="1"/><rect x="228" y="21" width="1" height="1"/><rect x="234" y="26" width="1" height="1"/><rect x="283" y="34" width="2" height="1"/><rect x="300" y="39" width="1" height="1"/><rect x="300" y="41" width="2" height="1"/><rect x="245" y="37" width="1" height="1"/><rect x="294" y="58" width="1" height="1"/><rect x="214" y="68" width="1" height="1"/><rect x="297" y="75" width="2" height="1"/><rect x="378" y="3" width="1" height="1"/><rect x="384" y="11" width="1" height="1"/><rect x="470" y="6" width="2" height="1"/><rect x="471" y="6" width="2" height="1"/><rect x="498" y="0" width="1" height="1"/><rect x="445" y="32" width="1" height="1"/><rect x="504" y="32" width="1" height="1"/><rect x="506" y="32" width="1" height="1"/><rect x="515" y="32" width="2" height="1"/><rect x="493" y="43" width="1" height="1"/><rect x="509" y="61" width="2" height="1"/><rect x="458" y="73" width="1" height="1"/><rect x="487" y="73" width="1" height="1"/><rect x="499" y="72" width="1" height="1"/><rect x="502" y="72" width="1" height="1"/><rect x="505" y="72" width="1" height="1"/><rect x="507" y="73" width="1" height="1"/><rect x="509" y="61" width="1" height="1"/><rect x="511" y="83" width="1" height="1"/><rect x="511" y="89" width="1" height="1"/><rect x="519" y="137" width="2" height="1"/><rect x="520" y="138" width="2" height="1"/><rect x="511" y="223" width="1" height="1"/><rect x="513" y="234" width="1" height="1"/><rect x="516" y="233" width="1" height="1"/><rect x="525" y="232" width="1" height="1"/><rect x="533" y="234" width="2" height="1"/><rect x="538" y="235" width="2" height="1"/><rect x="528" y="243" width="1" height="1"/><rect x="528" y="269" width="1" height="1"/><rect x="533" y="275" width="1" height="1"/><rect x="531" y="302" width="1" height="1"/><rect x="18" y="201" width="1" height="1"/><rect x="27" y="228" width="1" height="1"/><rect x="32" y="228" width="2" height="1"/><rect x="37" y="228" width="1" height="1"/><rect x="42" y="228" width="2" height="1"/><rect x="43" y="230" width="1" height="1"/><rect x="56" y="229" width="1" height="1"/><rect x="58" y="228" width="1" height="1"/><rect x="61" y="229" width="1" height="1"/><rect x="64" y="228" width="1" height="1"/><rect x="67" y="229" width="1" height="1"/><rect x="69" y="228" width="1" height="1"/><rect x="96" y="229" width="1" height="1"/><rect x="110" y="228" width="2" height="1"/><rect x="53" y="239" width="2" height="1"/><rect x="55" y="240" width="1" height="1"/><rect x="60" y="242" width="1" height="1"/><rect x="4" y="256" width="2" height="1"/><rect x="5" y="257" width="2" height="1"/><rect x="6" y="257" width="2" height="1"/><rect x="5" y="262" width="1" height="1"/><rect x="19" y="269" width="1" height="1"/><rect x="70" y="261" width="1" height="1"/><rect x="79" y="254" width="1" height="1"/><rect x="102" y="255" width="2" height="1"/><rect x="83" y="261" width="1" height="1"/></g><rect x="544.0" y="73.0" width="58.0" height="1" fill="#888"/><rect x="543.0" y="225.0" width="30.0" height="1" fill="#999"/><rect x="542.0" y="278.0" width="83.0" height="2" fill="#909090"/><rect x="542.0" y="283.0" width="24.0" height="1" fill="#999"/><rect x="59.0" y="294.0" width="46.0" height="1" fill="#222"/></svg></div><div style="left:280px;top:279px;width:630px;height:1px;background:#e8e8e8;"></div><div style="left:637px;top:292px;width:176px;height:58px;background:#00ffff;border:2px solid #000;border-left-width:1.500px;border-right-width:1.500px;"></div><div style="left:632px;top:288px;width:6px;height:6px;background:#000;"></div><div style="left:632px;top:346px;width:6px;height:6px;background:#000;"></div><div style="left:720px;top:288px;width:6px;height:6px;background:#000;"></div><div style="left:720px;top:346px;width:6px;height:6px;background:#000;"></div><div style="left:809px;top:288px;width:6px;height:6px;background:#000;"></div><div style="left:809px;top:346px;width:6px;height:6px;background:#000;"></div><div style="left:632px;top:317px;width:6px;height:6px;background:#000;"></div><div style="left:809px;top:317px;width:6px;height:6px;background:#000;"></div><div style="left:640px;top:295px;width:2px;height:29px;background:#ff0000;"></div><div style="left:675.5px;top:298.13px;font:bold 23px/23px 'Liberation Sans',sans-serif;color:#000;white-space:pre;letter-spacing:0.15px;">T 81623</div><div style="left:930px;top:307px;width:48px;height:24px;background:#fff;"></div><svg style="left:930px;top:307px" width="48" height="24" viewBox="0 0 48 24" shape-rendering="crispEdges" ><g fill="#909090"><rect x="4" y="7" width="20" height="1"/><rect x="27" y="7" width="8" height="1"/><rect x="4" y="10" width="30" height="1"/><rect x="4" y="12" width="12" height="1"/><rect x="4" y="14" width="26" height="1"/><rect x="5" y="16" width="22" height="1"/><rect x="30" y="16" width="8" height="1"/><rect x="6" y="17" width="20" height="1"/><rect x="30" y="17" width="8" height="1"/><rect x="6" y="19" width="20" height="1"/><rect x="30" y="19" width="8" height="1"/><rect x="6" y="20" width="18" height="1"/><rect x="30" y="20" width="8" height="1"/></g></svg><div style="left:930px;top:358.96px;font:16px/16px 'Liberation Sans',sans-serif;color:#000;white-space:pre;">1</div><div style="left:930px;top:401px;width:48px;height:24px;background:#fff;"></div><svg style="left:930px;top:401px" width="48" height="24" viewBox="0 0 48 24" shape-rendering="crispEdges" ><g fill="#a0a0a0"><rect x="4" y="7" width="14" height="1"/><rect x="20" y="7" width="6" height="1"/><rect x="41" y="5" width="2" height="1"/><rect x="40" y="16" width="4" height="1"/></g></svg><div style="left:929px;top:453.46px;font:16px/16px 'Liberation Sans',sans-serif;color:#000;white-space:pre;">2</div><svg style="left:285px;top:746px" width="16" height="16" viewBox="0 0 16 16" shape-rendering="crispEdges" ><rect x="0.500" y="0.500" width="14.500" height="15" fill="#fff" stroke="#000" stroke-width="1.300" shape-rendering="auto"/><g shape-rendering="auto" fill="none" stroke="#000" stroke-width="1"><path d="M7.500 2v12M2 8h11.500M7.500 2l-2 2.500M7.500 2l2 2.500M7.500 14l-2-2.500M7.500 14l2-2.500M2 8l2.500-2M2 8l2.500 2M13.500 8l-2.500-2M13.500 8l-2.500 2"/></g></svg><svg style="left:309px;top:746px" width="16" height="16" viewBox="0 0 16 16" shape-rendering="crispEdges" ><rect x="0.500" y="0.500" width="14.500" height="15" fill="#fff" stroke="#000" stroke-width="1.300" shape-rendering="auto"/><g shape-rendering="auto" fill="none" stroke="#000" stroke-width="1"><path d="M7.500 2v12M7.500 2l-2 2.500M7.500 2l2 2.500M7.500 14l-2-2.500M7.500 14l2-2.500"/></g></svg><svg style="left:332px;top:746px" width="16" height="16" viewBox="0 0 16 16" shape-rendering="crispEdges" ><rect x="0.500" y="0.500" width="14.500" height="15" fill="#fff" stroke="#000" stroke-width="1.300" shape-rendering="auto"/><g shape-rendering="auto" fill="none" stroke="#000" stroke-width="1"><path d="M2 8h11.500M2 8l2.500-2M2 8l2.500 2M13.500 8l-2.500-2M13.500 8l-2.500 2" stroke-width="1.300"/></g></svg><div style="left:354px;top:745px;width:1px;height:18px;background:#808080;"></div><div style="left:355px;top:745px;width:1px;height:18px;background:#fff;"></div><svg style="left:361px;top:746px" width="17" height="17" viewBox="0 0 17 17" shape-rendering="crispEdges" ><g shape-rendering="auto"><circle cx="6.500" cy="6.500" r="5.700" fill="#fff" stroke="#000" stroke-width="1.200"/><path d="M10.500 10.500 L15 15.500" stroke="#000060" stroke-width="2"/></g></svg><svg style="left:384px;top:746px" width="17" height="17" viewBox="0 0 17 17" shape-rendering="crispEdges" ><g shape-rendering="auto"><circle cx="6.500" cy="6.500" r="5.700" fill="#fff" stroke="#000" stroke-width="1.200"/><path d="M10.500 10.500 L15 15.500" stroke="#000060" stroke-width="2"/><path d="M3.500 6.500h6M6.500 3.500v6" stroke="#0000a0" stroke-width="2"/></g></svg><svg style="left:408px;top:746px" width="17" height="17" viewBox="0 0 17 17" shape-rendering="crispEdges" ><g shape-rendering="auto"><circle cx="6.500" cy="6.500" r="5.700" fill="#fff" stroke="#000" stroke-width="1.200"/><path d="M10.500 10.500 L15 15.500" stroke="#000060" stroke-width="2"/><path d="M3.500 6.500h6" stroke="#0000a0" stroke-width="2"/></g></svg><div style="left:431px;top:745px;width:1px;height:18px;background:#808080;"></div><div style="left:432px;top:745px;width:1px;height:18px;background:#fff;"></div><svg style="left:439px;top:746px" width="17" height="16" viewBox="0 0 17 16" shape-rendering="crispEdges" ><g><rect x="4.500" y="0.500" width="11" height="14" fill="#ffffa0" stroke="#000080" stroke-width="1"/><rect x="0.500" y="1.500" width="2" height="2" fill="#ffffa0" stroke="#000080"/><rect x="0.500" y="6.500" width="2" height="2" fill="#ffffa0" stroke="#000080"/><rect x="0.500" y="11.500" width="2" height="2" fill="#ffffa0" stroke="#000080"/><path d="M6 2.500h8M6 12.500h8" stroke="#000080"/><rect x="7" y="5" width="2" height="6" fill="#0000f0"/><rect x="9" y="4" width="2" height="7" fill="#f00000"/><rect x="11" y="5" width="2" height="6" fill="#00c000"/><rect x="13" y="6" width="1" height="5" fill="#f000f0"/></g></svg><div style="left:462px;top:745px;width:1px;height:18px;background:#808080;"></div><div style="left:463px;top:745px;width:1px;height:18px;background:#fff;"></div><svg style="left:470px;top:746px" width="17" height="17" viewBox="0 0 17 17" shape-rendering="crispEdges" ><g><rect x="0.500" y="0.500" width="5" height="8" fill="#008000" stroke="#000"/><rect x="1" y="1" width="4" height="3" fill="#fff"/><rect x="7.500" y="10.500" width="8" height="5" fill="#fff" stroke="#000"/><rect x="8" y="11" width="4" height="4" fill="#008000"/><g shape-rendering="auto"><path d="M7 2q5 0 5 5" fill="none" stroke="#0000a0" stroke-width="1.400"/><path d="M9 6h6l-3 3.500z" fill="#0000a0"/></g></g></svg><div style="left:494px;top:745px;width:1px;height:18px;background:#808080;"></div><div style="left:495px;top:745px;width:1px;height:18px;background:#fff;"></div><svg style="left:505px;top:746px" width="10" height="16" viewBox="0 0 10 16" shape-rendering="crispEdges" ><path d="M0.500 0.500v12l3-3 2.500 5.500 2-1-2.500-5h4z" fill="#fff" stroke="#000" stroke-width="1" shape-rendering="auto"/></svg><div style="left:523px;top:749.00px;font:bold 13px/13px 'Liberation Sans',sans-serif;color:#000;white-space:pre;letter-spacing:-0.4px;">ab</div><div style="left:539px;top:747px;width:1px;height:15px;background:#000;"></div><svg style="left:549px;top:747px" width="12" height="13" viewBox="0 0 12 13" shape-rendering="crispEdges" ><g shape-rendering="auto"><path d="M0.500 0.500h11v9l-3 3h-8z" fill="#ffff90" stroke="#404040" stroke-width="1"/><path d="M8.500 12.500v-3h3" fill="#fff" stroke="#404040" stroke-width=".8"/><path d="M2 6l5-5M2 10l9-9M5 11l6-6" stroke="#fff" stroke-width=".8"/></g></svg><div style="left:570px;top:745px;width:1px;height:18px;background:#808080;"></div><div style="left:571px;top:745px;width:1px;height:18px;background:#fff;"></div><svg style="left:580px;top:747px" width="13" height="14" viewBox="0 0 13 14" shape-rendering="crispEdges" ><g><rect x="0.500" y="0.500" width="12" height="13" fill="#808000" stroke="#404000"/><rect x="3" y="1" width="7" height="6" fill="#fff"/><rect x="3" y="9" width="7" height="4" fill="#a0a0a0"/><rect x="4" y="10" width="2" height="3" fill="#404040"/></g></svg><svg style="left:602px;top:749px" width="14" height="10" viewBox="0 0 14 10" shape-rendering="crispEdges" ><g shape-rendering="auto"><path d="M3.500 4q4-4.500 8 0t-1.500 5" fill="none" stroke="#0000c0" stroke-width="1.500"/><path d="M0.500 2.500l5.500 .5-3.500 4z" fill="#0000c0"/></g></svg><div style="left:624px;top:745px;width:1px;height:18px;background:#808080;"></div><div style="left:625px;top:745px;width:1px;height:18px;background:#fff;"></div><svg style="left:632px;top:746px" width="16" height="16" viewBox="0 0 16 16" shape-rendering="crispEdges" ><rect width="16" height="16" fill="#000"/><g shape-rendering="auto"><rect x="0.500" y="0.500" width="4.500" height="15" fill="#ffff00"/><path d="M4 8L15.500 0.500v15z" fill="#ffff00"/></g></svg><svg style="left:655px;top:746px" width="16" height="16" viewBox="0 0 16 16" shape-rendering="crispEdges" ><rect width="16" height="16" fill="#000"/><path d="M1.500 8L15 1v14z" fill="#ffff00" shape-rendering="auto"/></svg><svg style="left:678px;top:746px" width="16" height="16" viewBox="0 0 16 16" shape-rendering="crispEdges" ><rect width="16" height="16" fill="#000"/><path d="M14.500 8L1 1v14z" fill="#ffff00" shape-rendering="auto"/></svg><svg style="left:701px;top:746px" width="16" height="16" viewBox="0 0 16 16" shape-rendering="crispEdges" ><rect width="16" height="16" fill="#000"/><g shape-rendering="auto"><rect x="11" y="0.500" width="4.500" height="15" fill="#ffff00"/><path d="M12 8L0.500 0.500v15z" fill="#ffff00"/></g></svg><div style="left:726px;top:743px;width:33px;height:19px;background:#fff;"></div><div style="left:726px;top:743px;width:33px;height:1px;background:#808080;"></div><div style="left:726px;top:743px;width:1px;height:19px;background:#808080;"></div><div style="left:727px;top:744px;width:31px;height:1px;background:#000;"></div><div style="left:727px;top:744px;width:1px;height:17px;background:#000;"></div><div style="left:726px;top:761px;width:33px;height:1px;background:#fff;"></div><div style="left:758px;top:743px;width:1px;height:19px;background:#fff;"></div><div style="left:728px;top:760px;width:30px;height:1px;background:#c0c0c0;"></div><div style="left:757px;top:745px;width:1px;height:16px;background:#c0c0c0;"></div><div style="left:729.5px;top:747.00px;font:13px/13px 'Liberation Sans',sans-serif;color:#808080;white-space:pre;letter-spacing:-0.3px;">1/2</div></div></body></html>
